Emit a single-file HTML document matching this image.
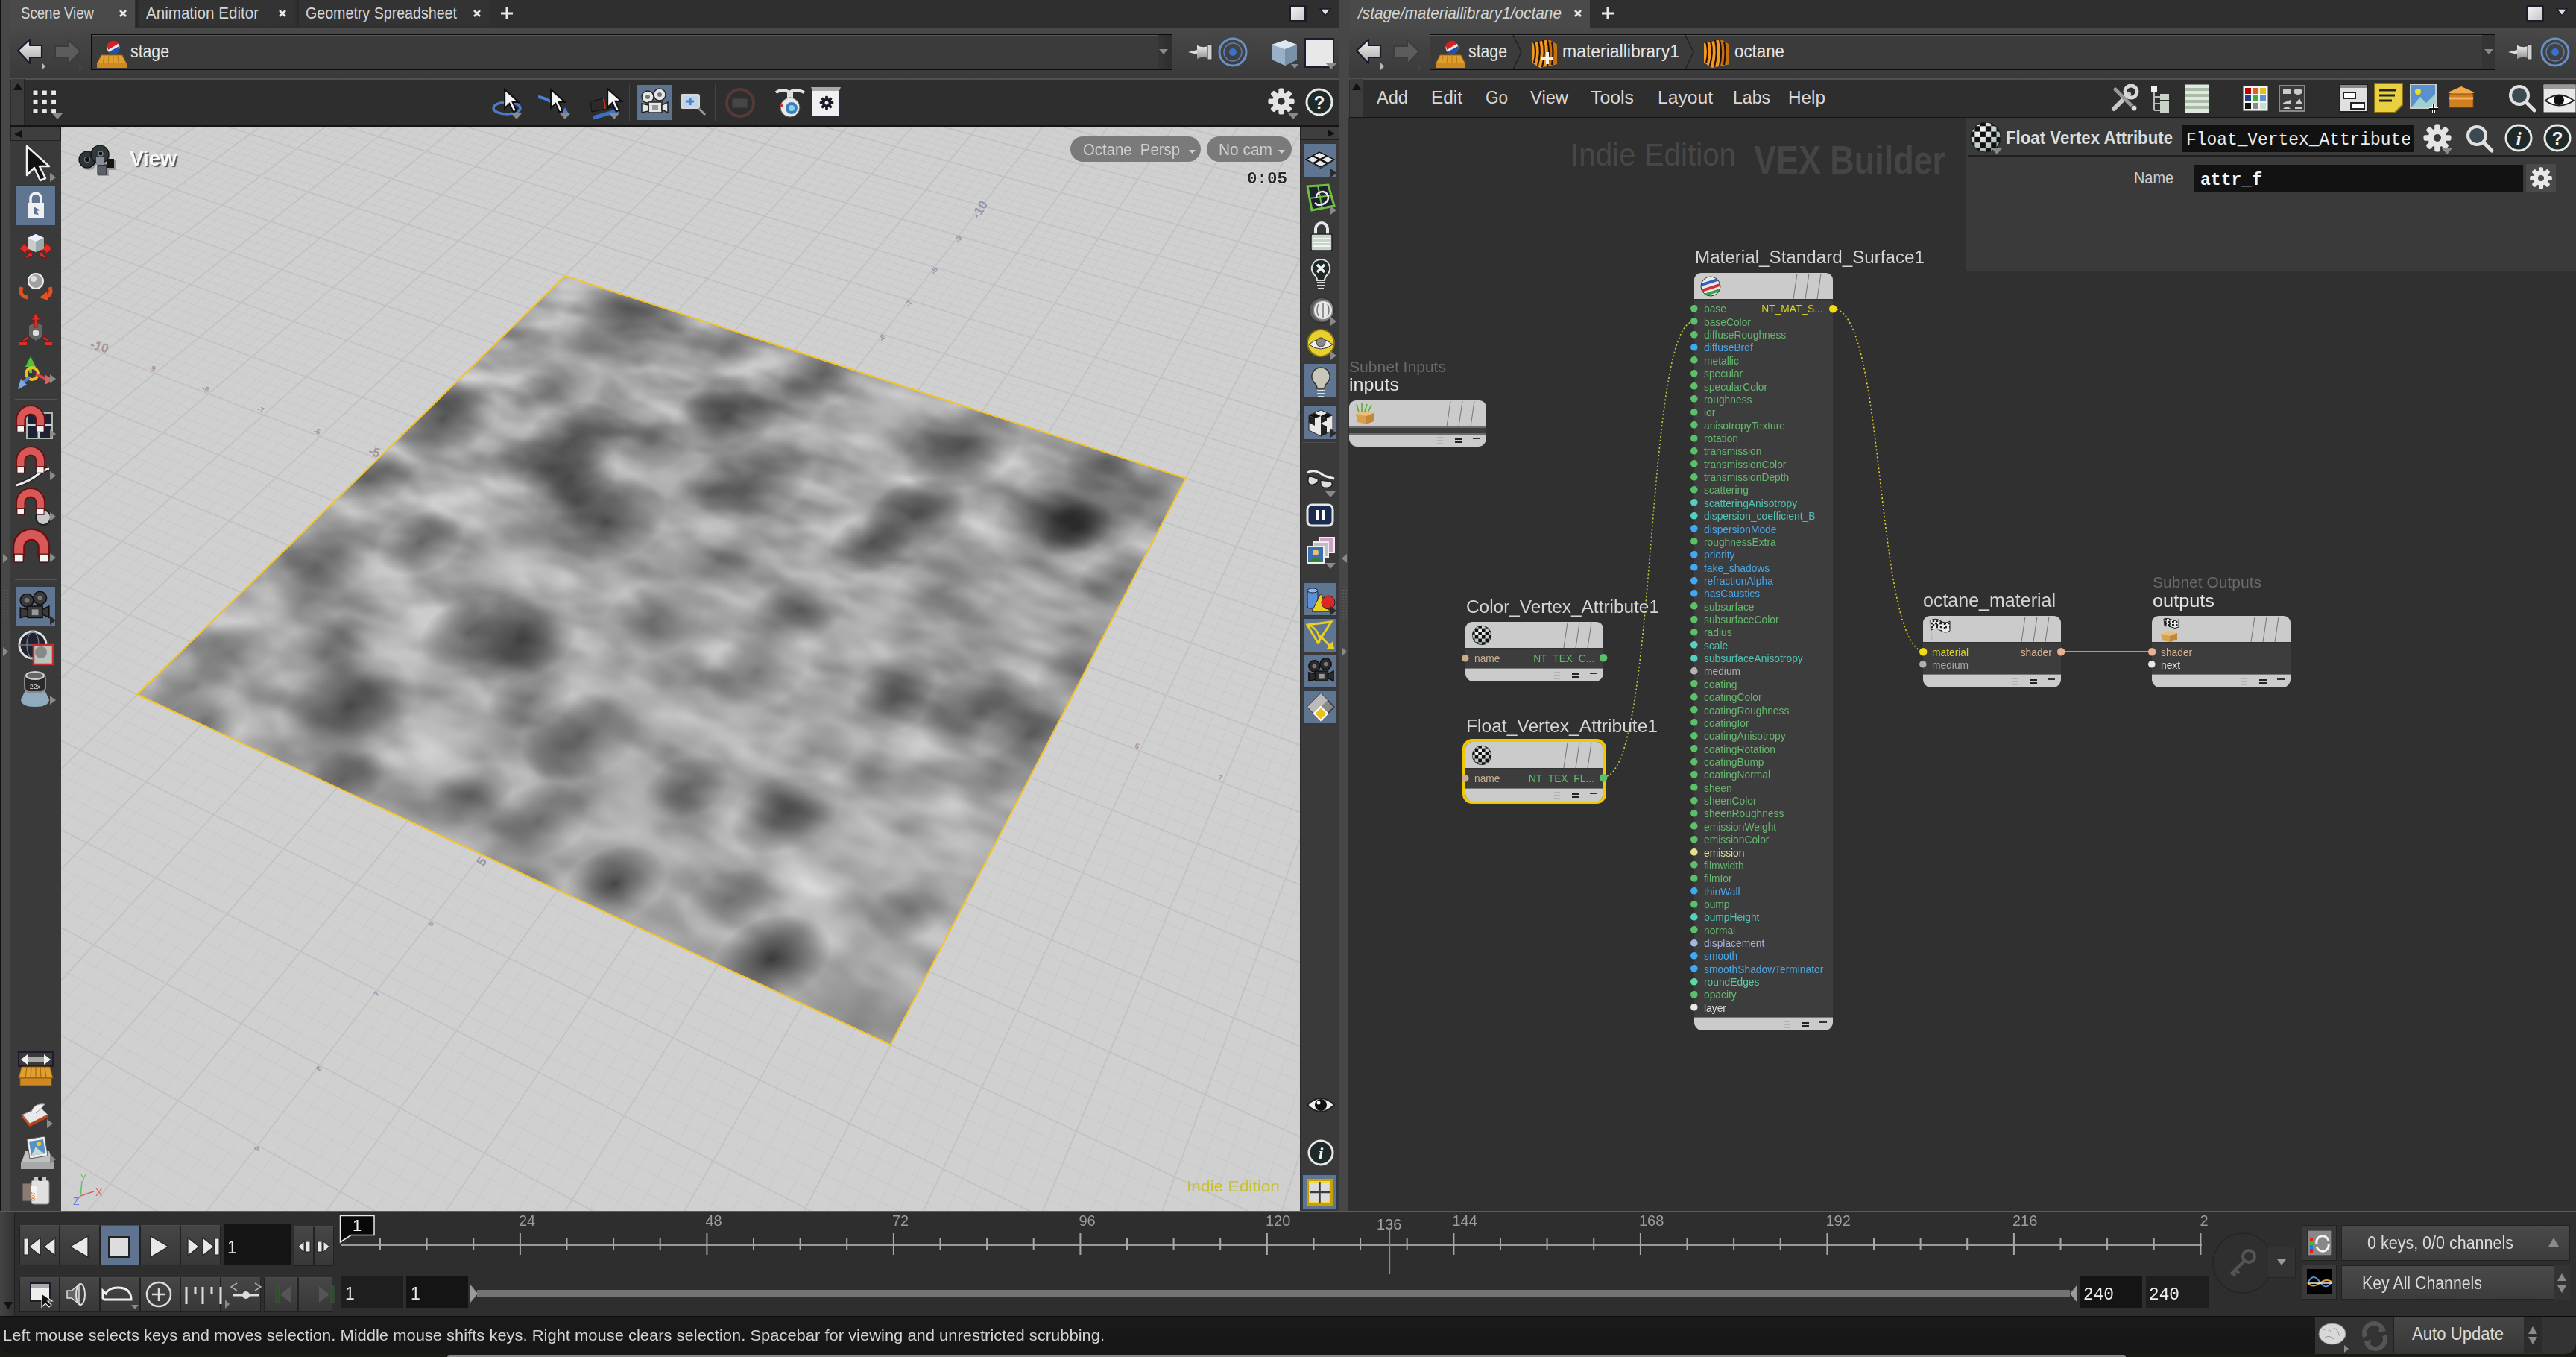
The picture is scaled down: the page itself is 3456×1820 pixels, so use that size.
<!DOCTYPE html>
<html><head><meta charset="utf-8"><style>
html,body{margin:0;padding:0;}
body{width:3456px;height:1820px;overflow:hidden;position:relative;background:#1c1a14;font-family:"Liberation Sans",sans-serif;}
body div{position:absolute;box-sizing:border-box;white-space:nowrap;line-height:1;}
svg{position:absolute;overflow:visible;}
</style></head><body>
<div style="left:0px;top:0px;width:3456px;height:1765px;background:#474747"></div><div style="left:0px;top:0px;width:1px;height:1765px;background:#111"></div><div style="left:13px;top:0px;width:1px;height:1624px;background:#343434"></div><div style="left:14px;top:0px;width:1783px;height:37px;background:#2f2f2f"></div><div style="left:14px;top:0px;width:167px;height:37px;background:#4a4a4a"></div><div style="left:183px;top:0px;width:213px;height:36px;background:#333;box-shadow:inset 3px 0 3px -1px #262626"></div><div style="left:398px;top:0px;width:259px;height:36px;background:#333;box-shadow:inset 3px 0 3px -1px #262626"></div><div style="left:28.0px;top:7.3px;font-size:22px;color:#d4d4d4;font-family:'Liberation Sans',sans-serif;transform:scaleX(0.8464);transform-origin:left;">Scene View</div><div style="left:196.0px;top:7.3px;font-size:22px;color:#d4d4d4;font-family:'Liberation Sans',sans-serif;transform:scaleX(0.9354);transform-origin:left;">Animation Editor</div><div style="left:410.0px;top:7.3px;font-size:22px;color:#d4d4d4;font-family:'Liberation Sans',sans-serif;transform:scaleX(0.8924);transform-origin:left;">Geometry Spreadsheet</div><svg style="left:159px;top:12px" width="12" height="12"><path d="M2 2L10 10M10 2L2 10" stroke="#e8e8e8" stroke-width="2.6"/></svg><svg style="left:373px;top:12px" width="12" height="12"><path d="M2 2L10 10M10 2L2 10" stroke="#e8e8e8" stroke-width="2.6"/></svg><svg style="left:634px;top:12px" width="12" height="12"><path d="M2 2L10 10M10 2L2 10" stroke="#e8e8e8" stroke-width="2.6"/></svg><svg style="left:671px;top:9px" width="18" height="18"><path d="M9 1V17M1 9H17" stroke="#e8e8e8" stroke-width="3"/></svg><div style="left:1729px;top:7px;width:24px;height:22px;background:#1c1c2a;"></div><div style="left:1732px;top:10px;width:18px;height:17px;background:linear-gradient(135deg,#f0f0f0,#c8c8c8)"></div><svg style="left:1769px;top:10px" width="18" height="14"><path d="M2 2H16L9 11Z" fill="#e0e0e0" stroke="#1a1a2a" stroke-width="1.5"/></svg><div style="left:14px;top:37px;width:1783px;height:67px;background:linear-gradient(#4a4a4a,#464646 15%,#3c3c3c 85%,#3a3a3a)"></div><div style="left:1810px;top:37px;width:1646px;height:67px;background:linear-gradient(#4a4a4a,#464646 15%,#3c3c3c 85%,#3a3a3a)"></div><svg style="left:20px;top:50px" width="44" height="44" viewBox="0 0 44 44">
<defs><linearGradient id="gArrow" x1="0" y1="0" x2="0" y2="1"><stop offset="0" stop-color="#f4f4f4"/><stop offset="1" stop-color="#a8a8a8"/></linearGradient></defs>
<path d="M4 18L20 3V11H36V27H20V35Z" fill="url(#gArrow)" stroke="#1a1a2e" stroke-width="2.2" stroke-linejoin="round"/>
<path d="M36 34L41 39L36 44Z" fill="#b8b8b8"/></svg><svg style="left:70px;top:51px" width="44" height="44" viewBox="0 0 44 44">
<path d="M38 18L22 3V11H4V27H22V35Z" fill="#5c5c5c" stroke="#3c3c3c" stroke-width="2"/>
<path d="M36 34L41 39L36 44Z" fill="#444"/></svg><div style="left:122px;top:46px;width:1450px;height:48px;background:#3b3b3b;border:1px solid #0c0c0c;border-right:none;box-shadow:inset 0 1px 0 #5a5a5a"></div><svg style="left:128px;top:52px" width="44.0" height="40.0" viewBox="0 0 44 40">
<path d="M8 22L36 22L42 34L2 34Z" fill="#e0a030" stroke="#a86810" stroke-width="1"/>
<rect x="2" y="33" width="40" height="6" fill="#d08820"/>
<path d="M12 23L10 33M18 23L17 33M24 23L24 33M30 23L31 33" stroke="#b87818" stroke-width="1"/>
<circle cx="24" cy="12" r="8.5" fill="#e8e8e8"/>
<path d="M15.8 9A8.5 8.5 0 0 1 31 6.5L17 15Z" fill="#d82020"/>
<path d="M17.5 18A8.5 8.5 0 0 0 32.3 13L32 10Z" fill="#2050b0"/>
</svg><div style="left:175.0px;top:57.5px;font-size:23px;color:#e6e6e6;font-family:'Liberation Sans',sans-serif;transform:scaleX(0.9242);transform-origin:left;">stage</div><div style="left:1553px;top:47px;width:19px;height:46px;background:linear-gradient(90deg,#363636,#2e2e2e)"></div><svg style="left:1553px;top:64px" width="16" height="12"><path d="M2 2H14L8 9Z" fill="#8a8a8a" stroke="none" stroke-width="1.5"/></svg><svg style="left:1592px;top:53px" width="40" height="34" viewBox="0 0 40 34">
<path d="M2 17L14 14V20Z" fill="#ddd"/><path d="M14 8Q22 12 28 9V25Q22 22 14 26Z" fill="url(#gPin)"/>
<defs><linearGradient id="gPin" x1="0" y1="0" x2="0" y2="1"><stop offset="0" stop-color="#f0f0f0"/><stop offset="1" stop-color="#909090"/></linearGradient></defs>
<rect x="28" y="7" width="6" height="20" fill="#cfcfcf" stroke="#333" stroke-width="1"/></svg><svg style="left:1634px;top:50px" width="40" height="40" viewBox="0 0 40 40">
<circle cx="20" cy="20" r="18" fill="none" stroke="#6a90c8" stroke-width="3"/>
<circle cx="20" cy="20" r="12" fill="none" stroke="#5a80b8" stroke-width="1.5"/>
<circle cx="20" cy="20" r="5" fill="#3a70d0"/></svg><svg style="left:1702px;top:50px" width="44" height="44" viewBox="0 0 44 44">
<path d="M4 10L22 4L38 10L38 30L22 38L4 30Z" fill="#9ab0c8"/>
<path d="M4 10L22 16L38 10L22 4Z" fill="#dce8f0"/><path d="M22 16L38 10V30L22 38Z" fill="#7890a8"/>
<path d="M30 36L40 36L35 42Z" fill="#8a8a8a"/></svg><div style="left:1750px;top:51px;width:40px;height:40px;background:#e8e8e8;border:2px solid #1c1c2e"></div><svg style="left:1778px;top:84px" width="16" height="10"><path d="M0 0H16L8 9Z" fill="#8a8a8a"/></svg><div style="left:14px;top:104px;width:1783px;height:1px;background:#111"></div><div style="left:14px;top:105px;width:1783px;height:2px;background:#505050"></div><div style="left:14px;top:107px;width:1783px;height:61px;background:#2e2e2e"></div><div style="left:14px;top:168px;width:1783px;height:2px;background:#141414"></div><div style="left:15px;top:106px;width:18px;height:62px;background:#3c3c3c;border-right:1px solid #262626"></div><svg style="left:17px;top:110px" width="14" height="12"><path d="M7 1L13 11H1Z" fill="#111"/></svg><svg style="left:43px;top:120px" width="44" height="44" viewBox="-1 -1 44 44"><rect x="0.0" y="0.0" width="7" height="7" fill="#e8e8e8" stroke="#222" stroke-width="1"/><rect x="12.3" y="0.0" width="7" height="7" fill="#e8e8e8" stroke="#222" stroke-width="1"/><rect x="24.6" y="0.0" width="7" height="7" fill="#e8e8e8" stroke="#222" stroke-width="1"/><rect x="0.0" y="12.3" width="7" height="7" fill="#e8e8e8" stroke="#222" stroke-width="1"/><rect x="12.3" y="12.3" width="7" height="7" fill="#e8e8e8" stroke="#222" stroke-width="1"/><rect x="24.6" y="12.3" width="7" height="7" fill="#e8e8e8" stroke="#222" stroke-width="1"/><rect x="0.0" y="24.6" width="7" height="7" fill="#e8e8e8" stroke="#222" stroke-width="1"/><rect x="12.3" y="24.6" width="7" height="7" fill="#e8e8e8" stroke="#222" stroke-width="1"/><rect x="24.6" y="24.6" width="7" height="7" fill="#e8e8e8" stroke="#222" stroke-width="1"/><path d="M26 31H40L33 39Z" fill="#8a8a8a"/></svg><svg style="left:660px;top:132px" width="42" height="24"><ellipse cx="20" cy="13" rx="18" ry="8" fill="none" stroke="#4a7ac8" stroke-width="3.5"/></svg><svg style="left:675px;top:118px" width="27.3" height="35.7" viewBox="0 0 26 34"><path d="M2 2V26L8 20L13 31L17 29L12 18H20Z" fill="#f4f4f4" stroke="#111" stroke-width="2"/></svg><svg style="left:686px;top:152px" width="14" height="9"><path d="M0 0H14L7 8Z" fill="#8a8a8a"/></svg><svg style="left:718px;top:124px" width="50" height="36"><path d="M4 6Q20 8 42 28" fill="none" stroke="#4a80d0" stroke-width="4"/><path d="M36 30L46 30L40 20Z" fill="#4a80d0"/></svg><svg style="left:737px;top:118px" width="27.3" height="35.7" viewBox="0 0 26 34"><path d="M2 2V26L8 20L13 31L17 29L12 18H20Z" fill="#f4f4f4" stroke="#111" stroke-width="2"/></svg><svg style="left:751px;top:152px" width="14" height="9"><path d="M0 0H14L7 8Z" fill="#8a8a8a"/></svg><svg style="left:790px;top:126px" width="52" height="36"><path d="M2 10L30 4L32 18L4 24Z" fill="#2a2a2a" stroke="#111"/><path d="M20 6L22 20" stroke="#c03020" stroke-width="2"/><path d="M6 32L40 22" stroke="#3a70c8" stroke-width="5"/></svg><svg style="left:813px;top:117px" width="27.3" height="35.7" viewBox="0 0 26 34"><path d="M2 2V26L8 20L13 31L17 29L12 18H20Z" fill="#f4f4f4" stroke="#111" stroke-width="2"/></svg><svg style="left:817px;top:152px" width="14" height="9"><path d="M0 0H14L7 8Z" fill="#8a8a8a"/></svg><div style="left:844px;top:113px;width:1px;height:49px;background:#444"></div><div style="left:855px;top:114px;width:46px;height:47px;background:#5e7490"></div><svg style="left:858px;top:117px" width="40.0" height="40.0" viewBox="0 0 40 40">
<circle cx="11" cy="13" r="8" fill="#e6e6e6" stroke="#222" stroke-width="1.5"/><circle cx="11" cy="13" r="3" fill="#777"/>
<circle cx="27" cy="10" r="8" fill="#e6e6e6" stroke="#222" stroke-width="1.5"/><circle cx="27" cy="10" r="3" fill="#777"/>
<rect x="12" y="20" width="18" height="14" fill="#e6e6e6" stroke="#222" stroke-width="1.5"/><rect x="17" y="24" width="8" height="7" fill="#999"/>
<path d="M30 24L38 20V34L30 30Z" fill="#e6e6e6" stroke="#222" stroke-width="1.5"/>
<path d="M12 24L3 22V34L12 32Z" fill="#e6e6e6" stroke="#222" stroke-width="1.5"/></svg><svg style="left:910px;top:122px" width="40" height="36"><rect x="2" y="3" width="28" height="22" rx="4" fill="#d8d8d8" stroke="#333" stroke-width="2"/><rect x="6" y="7" width="20" height="14" fill="#c0d4ea"/><path d="M16 9V19M11 14H21" stroke="#4a80d0" stroke-width="3"/><path d="M28 24L36 32" stroke="#999" stroke-width="3"/></svg><div style="left:959px;top:113px;width:1px;height:49px;background:#444"></div><svg style="left:972px;top:117px" width="42" height="42"><circle cx="21" cy="21" r="18" fill="none" stroke="#553838" stroke-width="4"/><rect x="11" y="15" width="20" height="12" fill="#464646" stroke="#3a3a3a" stroke-width="2"/></svg><div style="left:1026px;top:113px;width:1px;height:49px;background:#444"></div><svg style="left:1039px;top:116px" width="44" height="44"><path d="M2 8Q12 2 20 8Q28 2 40 8" fill="none" stroke="#e0e0e0" stroke-width="4"/><rect x="17" y="8" width="8" height="8" fill="#ddd"/><circle cx="21" cy="28" r="13" fill="#e8e8e8" stroke="#555" stroke-width="1"/><circle cx="23" cy="29" r="8" fill="#3a80b8"/><circle cx="23" cy="29" r="4" fill="#8ad0f0"/><circle cx="10" cy="26" r="2" fill="#e02020"/></svg><div style="left:1088px;top:117px;width:40px;height:40px;background:#f0f0f0;border:2px solid #2a2a3a;border-top:5px solid #aaa"></div><svg style="left:1099px;top:128px" width="20" height="20" viewBox="0 0 40 40"><g stroke="#222" stroke-width="0"><circle cx="20" cy="20" r="12.5" fill="#1a1a2a"/><rect x="16.2" y="1.5" width="7.6" height="12" rx="2.2" fill="#1a1a2a" transform="rotate(0.0 20 20)"/><rect x="16.2" y="1.5" width="7.6" height="12" rx="2.2" fill="#1a1a2a" transform="rotate(45.0 20 20)"/><rect x="16.2" y="1.5" width="7.6" height="12" rx="2.2" fill="#1a1a2a" transform="rotate(90.0 20 20)"/><rect x="16.2" y="1.5" width="7.6" height="12" rx="2.2" fill="#1a1a2a" transform="rotate(135.0 20 20)"/><rect x="16.2" y="1.5" width="7.6" height="12" rx="2.2" fill="#1a1a2a" transform="rotate(180.0 20 20)"/><rect x="16.2" y="1.5" width="7.6" height="12" rx="2.2" fill="#1a1a2a" transform="rotate(225.0 20 20)"/><rect x="16.2" y="1.5" width="7.6" height="12" rx="2.2" fill="#1a1a2a" transform="rotate(270.0 20 20)"/><rect x="16.2" y="1.5" width="7.6" height="12" rx="2.2" fill="#1a1a2a" transform="rotate(315.0 20 20)"/></g><circle cx="20" cy="20" r="5" fill="#f0f0f0"/></svg><svg style="left:1700px;top:117px" width="38" height="38" viewBox="0 0 40 40"><g stroke="#222" stroke-width="0"><circle cx="20" cy="20" r="12.5" fill="#e4e4e4"/><rect x="16.2" y="1.5" width="7.6" height="12" rx="2.2" fill="#e4e4e4" transform="rotate(0.0 20 20)"/><rect x="16.2" y="1.5" width="7.6" height="12" rx="2.2" fill="#e4e4e4" transform="rotate(45.0 20 20)"/><rect x="16.2" y="1.5" width="7.6" height="12" rx="2.2" fill="#e4e4e4" transform="rotate(90.0 20 20)"/><rect x="16.2" y="1.5" width="7.6" height="12" rx="2.2" fill="#e4e4e4" transform="rotate(135.0 20 20)"/><rect x="16.2" y="1.5" width="7.6" height="12" rx="2.2" fill="#e4e4e4" transform="rotate(180.0 20 20)"/><rect x="16.2" y="1.5" width="7.6" height="12" rx="2.2" fill="#e4e4e4" transform="rotate(225.0 20 20)"/><rect x="16.2" y="1.5" width="7.6" height="12" rx="2.2" fill="#e4e4e4" transform="rotate(270.0 20 20)"/><rect x="16.2" y="1.5" width="7.6" height="12" rx="2.2" fill="#e4e4e4" transform="rotate(315.0 20 20)"/></g><circle cx="20" cy="20" r="5" fill="#2e2e2e"/></svg><svg style="left:1728px;top:152px" width="14" height="9"><path d="M0 0H14L7 8Z" fill="#8a8a8a"/></svg><svg style="left:1750px;top:117px" width="40" height="40" viewBox="0 0 40 40"><circle cx="20" cy="20" r="17" fill="#1e2a2a" stroke="#e8e8e8" stroke-width="3"/><text x="20" y="29" text-anchor="middle" font-family="Liberation Sans" font-weight="bold" font-size="24" fill="#f0f0f0">?</text></svg><div style="left:14px;top:170px;width:68px;height:1454px;background:#3a3a3a"></div><div style="left:14px;top:170px;width:68px;height:19px;background:#3e3e3e;border:1px solid #222"></div><svg style="left:18px;top:174px" width="12" height="12"><path d="M1 6L11 1V11Z" fill="#111"/></svg><div style="left:1744px;top:170px;width:53px;height:1454px;background:#3a3a3a;border-left:1px solid #2a2a2a;border-right:1px solid #262626"></div><div style="left:1744px;top:170px;width:53px;height:18px;background:#3e3e3e;border:1px solid #222"></div><svg style="left:1780px;top:173px" width="12" height="12"><path d="M11 6L1 1V11Z" fill="#111"/></svg><div style="left:1797px;top:158px;width:12px;height:1466px;background:#474747"></div><div style="left:1810px;top:0px;width:1646px;height:37px;background:#2f2f2f"></div><div style="left:1810px;top:0px;width:323px;height:37px;background:#4a4a4a"></div><div style="left:1822.0px;top:7.3px;font-size:22px;color:#d4d4d4;font-family:'Liberation Sans',sans-serif;font-style:italic;transform:scaleX(0.9460);transform-origin:left;">/stage/materiallibrary1/octane</div><svg style="left:2111px;top:12px" width="12" height="12"><path d="M2 2L10 10M10 2L2 10" stroke="#e8e8e8" stroke-width="2.6"/></svg><svg style="left:2148px;top:9px" width="18" height="18"><path d="M9 1V17M1 9H17" stroke="#e8e8e8" stroke-width="3"/></svg><div style="left:3389px;top:7px;width:24px;height:22px;background:#1c1c2a;"></div><div style="left:3392px;top:10px;width:18px;height:17px;background:linear-gradient(135deg,#f0f0f0,#c8c8c8)"></div><svg style="left:3428px;top:10px" width="18" height="14"><path d="M2 2H16L9 11Z" fill="#e0e0e0" stroke="#1a1a2a" stroke-width="1.5"/></svg><svg style="left:1816px;top:50px" width="44" height="44" viewBox="0 0 44 44">
<defs><linearGradient id="gArrow" x1="0" y1="0" x2="0" y2="1"><stop offset="0" stop-color="#f4f4f4"/><stop offset="1" stop-color="#a8a8a8"/></linearGradient></defs>
<path d="M4 18L20 3V11H36V27H20V35Z" fill="url(#gArrow)" stroke="#1a1a2e" stroke-width="2.2" stroke-linejoin="round"/>
<path d="M36 34L41 39L36 44Z" fill="#b8b8b8"/></svg><svg style="left:1866px;top:51px" width="44" height="44" viewBox="0 0 44 44">
<path d="M38 18L22 3V11H4V27H22V35Z" fill="#5c5c5c" stroke="#3c3c3c" stroke-width="2"/>
<path d="M36 34L41 39L36 44Z" fill="#444"/></svg><div style="left:1918px;top:46px;width:1430px;height:48px;background:#3b3b3b;border:1px solid #0c0c0c;border-right:none;box-shadow:inset 0 1px 0 #5a5a5a"></div><div style="left:3330px;top:47px;width:18px;height:46px;background:#353535"></div><svg style="left:3331px;top:64px" width="16" height="12"><path d="M2 2H14L8 9Z" fill="#8a8a8a" stroke="none" stroke-width="1.5"/></svg><svg style="left:1924px;top:52px" width="44.0" height="40.0" viewBox="0 0 44 40">
<path d="M8 22L36 22L42 34L2 34Z" fill="#e0a030" stroke="#a86810" stroke-width="1"/>
<rect x="2" y="33" width="40" height="6" fill="#d08820"/>
<path d="M12 23L10 33M18 23L17 33M24 23L24 33M30 23L31 33" stroke="#b87818" stroke-width="1"/>
<circle cx="24" cy="12" r="8.5" fill="#e8e8e8"/>
<path d="M15.8 9A8.5 8.5 0 0 1 31 6.5L17 15Z" fill="#d82020"/>
<path d="M17.5 18A8.5 8.5 0 0 0 32.3 13L32 10Z" fill="#2050b0"/>
</svg><div style="left:1970.0px;top:57.5px;font-size:23px;color:#e6e6e6;font-family:'Liberation Sans',sans-serif;transform:scaleX(0.9242);transform-origin:left;">stage</div><svg style="left:2029px;top:46px" width="14" height="48"><path d="M1 1L12 24L1 47" fill="none" stroke="#222" stroke-width="1.5"/></svg><svg style="left:2052px;top:50px" width="40" height="42" viewBox="0 0 40 42">
<path d="M3 8L26 3L37 10L37 36L14 41L3 34Z" fill="#f09820"/>
<path d="M26 3L37 10L37 36L26 38Z" fill="#c87010"/>
<path d="M6 6Q10 20 6 34M12 5Q16 20 11 38M18 4Q22 20 17 40M24 3Q28 20 24 39M30 6Q33 20 30 37" stroke="#201008" stroke-width="2.2" fill="none"/>
<path d='M24 20V36M16 28H32' stroke='#f4f4f4' stroke-width='4'/>
</svg><div style="left:2096.0px;top:57.5px;font-size:23px;color:#e6e6e6;font-family:'Liberation Sans',sans-serif;transform:scaleX(0.9986);transform-origin:left;">materiallibrary1</div><svg style="left:2260px;top:46px" width="14" height="48"><path d="M1 1L12 24L1 47" fill="none" stroke="#222" stroke-width="1.5"/></svg><svg style="left:2283px;top:50px" width="40" height="42" viewBox="0 0 40 42">
<path d="M3 8L26 3L37 10L37 36L14 41L3 34Z" fill="#f09820"/>
<path d="M26 3L37 10L37 36L26 38Z" fill="#c87010"/>
<path d="M6 6Q10 20 6 34M12 5Q16 20 11 38M18 4Q22 20 17 40M24 3Q28 20 24 39M30 6Q33 20 30 37" stroke="#201008" stroke-width="2.2" fill="none"/>

</svg><div style="left:2327.0px;top:57.5px;font-size:23px;color:#e6e6e6;font-family:'Liberation Sans',sans-serif;transform:scaleX(0.9701);transform-origin:left;">octane</div><svg style="left:3363px;top:53px" width="40" height="34" viewBox="0 0 40 34">
<path d="M2 17L14 14V20Z" fill="#ddd"/><path d="M14 8Q22 12 28 9V25Q22 22 14 26Z" fill="url(#gPin)"/>
<defs><linearGradient id="gPin" x1="0" y1="0" x2="0" y2="1"><stop offset="0" stop-color="#f0f0f0"/><stop offset="1" stop-color="#909090"/></linearGradient></defs>
<rect x="28" y="7" width="6" height="20" fill="#cfcfcf" stroke="#333" stroke-width="1"/></svg><svg style="left:3408px;top:50px" width="40" height="40" viewBox="0 0 40 40">
<circle cx="20" cy="20" r="18" fill="none" stroke="#6a90c8" stroke-width="3"/>
<circle cx="20" cy="20" r="12" fill="none" stroke="#5a80b8" stroke-width="1.5"/>
<circle cx="20" cy="20" r="5" fill="#3a70d0"/></svg><div style="left:1810px;top:104px;width:1646px;height:1px;background:#111"></div><div style="left:1810px;top:105px;width:1646px;height:2px;background:#505050"></div><div style="left:1810px;top:107px;width:1646px;height:50px;background:#2e2e2e"></div><div style="left:1810px;top:157px;width:1646px;height:1px;background:#141414"></div><div style="left:1811px;top:106px;width:18px;height:51px;background:#3c3c3c;border-right:1px solid #262626"></div><svg style="left:1813px;top:110px" width="14" height="12"><path d="M7 1L13 11H1Z" fill="#111"/></svg><div style="left:1847.0px;top:119.5px;font-size:23px;color:#d8d8d8;font-family:'Liberation Sans',sans-serif;transform:scaleX(1.0260);transform-origin:left;">Add</div><div style="left:1920.0px;top:119.5px;font-size:23px;color:#d8d8d8;font-family:'Liberation Sans',sans-serif;transform:scaleX(1.0595);transform-origin:left;">Edit</div><div style="left:1993.0px;top:119.5px;font-size:23px;color:#d8d8d8;font-family:'Liberation Sans',sans-serif;transform:scaleX(0.9776);transform-origin:left;">Go</div><div style="left:2053.0px;top:119.5px;font-size:23px;color:#d8d8d8;font-family:'Liberation Sans',sans-serif;transform:scaleX(1.0316);transform-origin:left;">View</div><div style="left:2134.0px;top:119.5px;font-size:23px;color:#d8d8d8;font-family:'Liberation Sans',sans-serif;transform:scaleX(1.0800);transform-origin:left;">Tools</div><div style="left:2224.0px;top:119.5px;font-size:23px;color:#d8d8d8;font-family:'Liberation Sans',sans-serif;transform:scaleX(1.0715);transform-origin:left;">Layout</div><div style="left:2325.0px;top:119.5px;font-size:23px;color:#d8d8d8;font-family:'Liberation Sans',sans-serif;transform:scaleX(1.0025);transform-origin:left;">Labs</div><div style="left:2399.0px;top:119.5px;font-size:23px;color:#d8d8d8;font-family:'Liberation Sans',sans-serif;transform:scaleX(1.0568);transform-origin:left;">Help</div><div style="left:82px;top:170px;width:1662px;height:1454px;background:#d0d0d0;overflow:hidden"></div><svg style="left:82px;top:170px;overflow:hidden" width="1662" height="1454">
<path d="M378.5 -520.4L-3365.8 1491.0M363.2 -518.8L3278.9 115.2M387.2 -518.5L-3357.9 1504.2M356.7 -515.3L3281.5 123.3M396.0 -516.6L-3349.9 1517.6M350.1 -511.8L3284.2 131.3M404.9 -514.7L-3341.9 1531.0M343.5 -508.3L3286.9 139.5M422.6 -510.8L-3325.6 1558.3M330.2 -501.2L3292.3 156.0M431.5 -508.9L-3317.4 1572.1M323.5 -497.6L3295.1 164.4M440.5 -507.0L-3309.1 1586.0M316.8 -494.0L3297.8 172.8M449.4 -505.0L-3300.7 1600.0M310.0 -490.4L3300.6 181.3M467.5 -501.1L-3283.7 1628.4M296.3 -483.1L3306.3 198.6M476.5 -499.2L-3275.1 1642.8M289.4 -479.4L3309.2 207.3M485.6 -497.2L-3266.4 1657.3M282.4 -475.6L3312.1 216.2M494.7 -495.2L-3257.7 1672.0M275.4 -471.9L3315.0 225.1M513.0 -491.2L-3240.0 1701.6M261.3 -464.4L3320.9 243.1M522.2 -489.3L-3231.0 1716.6M254.2 -460.6L3324.0 252.3M531.4 -487.3L-3221.9 1731.8M247.0 -456.7L3327.0 261.5M540.7 -485.3L-3212.8 1747.1M239.8 -452.9L3330.1 270.8M559.3 -481.2L-3194.3 1778.0M225.3 -445.1L3336.3 289.7M568.6 -479.2L-3184.9 1793.7M218.0 -441.2L3339.4 299.3M578.0 -477.2L-3175.4 1809.5M210.6 -437.3L3342.6 309.0M587.4 -475.1L-3165.9 1825.5M203.2 -433.3L3345.8 318.8M606.3 -471.0L-3146.5 1857.9M188.2 -425.3L3352.3 338.6M615.8 -469.0L-3136.7 1874.3M180.7 -421.3L3355.6 348.6M625.3 -466.9L-3126.8 1890.9M173.1 -417.2L3359.0 358.8M634.9 -464.8L-3116.9 1907.6M165.4 -413.1L3362.3 369.0M654.1 -460.7L-3096.6 1941.5M150.0 -404.9L3369.2 389.8M663.8 -458.6L-3086.3 1958.7M142.2 -400.7L3372.6 400.4M673.4 -456.5L-3076.0 1976.0M134.3 -396.5L3376.1 411.0M683.1 -454.4L-3065.5 1993.5M126.5 -392.3L3379.7 421.8M702.7 -450.2L-3044.3 2029.0M110.5 -383.8L3386.9 443.7M712.5 -448.0L-3033.5 2047.0M102.5 -379.5L3390.5 454.7M722.3 -445.9L-3022.7 2065.2M94.4 -375.2L3394.2 465.9M732.2 -443.8L-3011.7 2083.6M86.3 -370.8L3397.9 477.3M752.0 -439.5L-2989.4 2120.8M69.8 -362.1L3405.5 500.3M762.0 -437.3L-2978.1 2139.7M61.5 -357.6L3409.3 511.9M772.0 -435.2L-2966.7 2158.8M53.2 -353.2L3413.2 523.7M782.0 -433.0L-2955.2 2178.1M44.8 -348.7L3417.1 535.6M802.2 -428.6L-2931.8 2217.2M27.8 -339.6L3425.1 559.9M812.3 -426.4L-2920.0 2237.0M19.2 -335.0L3429.1 572.2M822.5 -424.2L-2908.0 2257.1M10.6 -330.4L3433.2 584.6M832.7 -422.0L-2895.9 2277.3M1.9 -325.8L3437.3 597.2M853.2 -417.6L-2871.3 2318.5M-15.6 -316.4L3445.7 622.7M863.5 -415.3L-2858.8 2339.3M-24.4 -311.7L3450.0 635.7M873.9 -413.1L-2846.2 2360.4M-33.3 -306.9L3454.3 648.8M884.2 -410.8L-2833.5 2381.7M-42.3 -302.1L3458.7 662.1M905.1 -406.3L-2807.6 2425.0M-60.4 -292.5L3467.5 689.1M915.6 -404.1L-2794.5 2447.0M-69.6 -287.6L3472.0 702.8M926.1 -401.8L-2781.2 2469.3M-78.8 -282.6L3476.6 716.7M936.6 -399.5L-2767.8 2491.7M-88.1 -277.7L3481.2 730.7M957.9 -394.9L-2740.5 2537.4M-106.8 -267.7L3490.6 759.3M968.5 -392.6L-2726.6 2560.6M-116.3 -262.6L3495.4 773.8M979.2 -390.3L-2712.6 2584.0M-125.8 -257.5L3500.2 788.5M989.9 -387.9L-2698.4 2607.7M-135.4 -252.4L3505.1 803.3M1011.5 -383.3L-2669.6 2655.9M-154.8 -242.0L3515.0 833.6M1022.4 -380.9L-2655.0 2680.4M-164.6 -236.8L3520.1 849.0M1033.2 -378.6L-2640.2 2705.2M-174.4 -231.5L3525.2 864.6M1044.2 -376.2L-2625.2 2730.2M-184.4 -226.2L3530.4 880.4M1066.1 -371.4L-2594.8 2781.2M-204.5 -215.5L3541.0 912.5M1077.1 -369.1L-2579.3 2807.1M-214.6 -210.1L3546.3 928.8M1088.2 -366.7L-2563.6 2833.3M-224.8 -204.6L3551.8 945.4M1099.3 -364.3L-2547.8 2859.8M-235.1 -199.1L3557.3 962.2M1121.6 -359.4L-2515.5 2913.8M-255.9 -188.0L3568.5 996.3M1132.9 -357.0L-2499.1 2941.2M-266.4 -182.4L3574.3 1013.8M1144.1 -354.5L-2482.5 2969.0M-277.0 -176.7L3580.1 1031.4M1155.4 -352.1L-2465.7 2997.1M-287.7 -171.0L3585.9 1049.2M1178.2 -347.2L-2431.5 3054.3M-309.2 -159.5L3597.9 1085.7M1189.6 -344.7L-2414.1 3083.5M-320.1 -153.7L3604.0 1104.2M1201.1 -342.2L-2396.5 3113.0M-331.1 -147.8L3610.2 1123.0M1212.6 -339.7L-2378.6 3142.8M-342.2 -141.9L3616.4 1142.1M1235.7 -334.7L-2342.3 3203.7M-364.6 -130.0L3629.2 1181.0M1247.3 -332.2L-2323.7 3234.7M-375.9 -123.9L3635.7 1200.8M1259.0 -329.7L-2305.0 3266.0M-387.3 -117.8L3642.4 1220.9M1270.7 -327.1L-2286.0 3297.8M-398.7 -111.7L3649.1 1241.3M1294.2 -322.0L-2247.3 3362.6M-422.0 -99.3L3662.7 1282.9M1306.1 -319.5L-2227.6 3395.6M-433.7 -93.0L3669.7 1304.2M1318.0 -316.9L-2207.6 3429.0M-445.5 -86.7L3676.8 1325.7M1329.9 -314.3L-2187.3 3462.9M-457.5 -80.3L3684.0 1347.6M1353.8 -309.1L-2146.0 3532.0M-481.6 -67.4L3698.7 1392.2M1365.9 -306.5L-2125.0 3567.3M-493.8 -60.9L3706.2 1415.0M1378.0 -303.9L-2103.6 3603.0M-506.1 -54.3L3713.8 1438.2M1390.1 -301.3L-2082.0 3639.2M-518.5 -47.7L3721.5 1461.7M1414.5 -296.0L-2037.8 3713.1M-543.6 -34.3L3737.3 1509.7M1426.8 -293.3L-2015.3 3750.8M-556.2 -27.5L3745.4 1534.3M1439.1 -290.6L-1992.5 3789.0M-569.0 -20.7L3753.5 1559.2M1451.5 -288.0L-1969.3 3827.8M-581.9 -13.8L3761.9 1584.5M1476.4 -282.6L-1922.0 3906.9M-608.0 0.1L3778.9 1636.3M1488.9 -279.9L-1897.8 3947.4M-621.2 7.2L3787.6 1662.8M1501.4 -277.2L-1873.3 3988.4M-634.5 14.3L3796.5 1689.8M1514.0 -274.4L-1848.4 4030.0M-647.9 21.5L3805.5 1717.1M1539.3 -268.9L-1797.6 4115.1M-675.1 36.0L3823.9 1773.2M1552.1 -266.2L-1771.6 4158.6M-688.9 43.3L3833.3 1801.9M1564.8 -263.4L-1745.2 4202.7M-702.7 50.7L3842.9 1831.0M1577.7 -260.6L-1718.4 4247.5M-716.7 58.2L3852.6 1860.7M1603.5 -255.1L-1663.6 4339.2M-745.0 73.3L3872.6 1921.5M1616.4 -252.2L-1635.6 4386.1M-759.4 81.0L3882.9 1952.7M1629.5 -249.4L-1607.2 4433.7M-773.8 88.7L3893.3 1984.4M1642.5 -246.6L-1578.3 4482.0M-788.4 96.5L3903.9 2016.7M1668.8 -240.9L-1519.1 4581.0M-817.9 112.3L3925.7 2082.9M1682.0 -238.0L-1488.8 4631.7M-832.9 120.3L3936.9 2116.9M1695.3 -235.2L-1458.0 4683.2M-848.0 128.3L3948.3 2151.5M1708.6 -232.3L-1426.7 4735.6M-863.2 136.5L3959.8 2186.8M1735.4 -226.5L-1362.6 4842.9M-894.0 152.9L3983.6 2259.2M1748.9 -223.5L-1329.7 4897.9M-909.6 161.3L3995.9 2296.4M1762.4 -220.6L-1296.3 4953.8M-925.4 169.7L4008.3 2334.3M1776.0 -217.7L-1262.3 5010.7M-941.3 178.2L4021.0 2373.0M1803.3 -211.8L-1192.6 5127.4M-973.5 195.4L4047.2 2452.5M1817.1 -208.8L-1156.8 5187.2M-989.8 204.1L4060.6 2493.4M1830.8 -205.8L-1120.4 5248.1M-1006.3 212.9L4074.3 2535.1M1844.7 -202.8L-1083.4 5310.1M-1022.9 221.8L4088.3 2577.6M1872.5 -196.8L-1007.3 5437.5M-1056.6 239.8L4117.1 2665.3M1886.5 -193.7L-968.2 5502.9M-1073.7 248.9L4132.0 2710.5M1900.6 -190.7L-928.4 5569.5M-1090.9 258.1L4147.1 2756.6M1914.7 -187.6L-887.8 5637.3M-1108.3 267.4L4162.6 2803.7M1943.1 -181.5L-804.4 5776.8M-1143.6 286.3L4194.5 2900.9M1957.4 -178.4L-761.6 5848.6M-1161.5 295.9L4211.0 2951.0M1971.7 -175.3L-717.8 5921.7M-1179.5 305.5L4227.9 3002.3M1986.1 -172.2L-673.3 5996.3M-1197.8 315.2L4245.1 3054.6M2015.1 -165.9L-581.5 6149.9M-1234.8 335.0L4280.7 3163.0M2029.6 -162.7L-534.3 6229.0M-1253.5 345.0L4299.1 3219.0M2044.3 -159.6L-486.0 6309.6M-1272.5 355.1L4317.9 3276.3M2059.0 -156.4L-436.8 6392.0M-1291.6 365.4L4337.2 3334.9M2088.5 -150.0L-335.3 6561.8M-1330.4 386.1L4377.2 3456.4M2103.4 -146.8L-283.0 6649.4M-1350.1 396.6L4397.8 3519.3M2118.3 -143.5L-229.5 6738.8M-1370.0 407.2L4419.0 3583.8M2133.3 -140.3L-174.9 6830.2M-1390.1 418.0L4440.8 3649.9M2163.4 -133.8L-62.1 7019.0M-1430.8 439.8L4485.9 3787.1M2178.6 -130.5L-3.8 7116.6M-1451.5 450.8L4509.3 3858.3M2193.8 -127.2L55.8 7216.3M-1472.4 462.0L4533.3 3931.4M2209.1 -123.9L116.8 7318.3M-1493.5 473.3L4558.0 4006.5M2239.8 -117.2L243.0 7529.5M-1536.4 496.2L4609.3 4162.6M2255.3 -113.9L308.3 7638.8M-1558.2 507.8L4636.0 4244.0M2270.9 -110.5L375.2 7750.7M-1580.2 519.6L4663.5 4327.5M2286.5 -107.1L443.7 7865.3M-1602.5 531.5L4691.8 4413.5M2317.9 -100.3L585.7 8103.0M-1647.6 555.6L4750.7 4592.9M2333.7 -96.9L659.4 8226.3M-1670.6 567.9L4781.5 4686.5M2349.5 -93.4L735.0 8352.8M-1693.8 580.3L4813.2 4783.0M2365.5 -90.0L812.5 8482.5M-1717.2 592.8L4845.9 4882.4M2397.5 -83.1L973.7 8752.1M-1764.9 618.3L4914.3 5090.6M2413.7 -79.6L1057.5 8892.3M-1789.1 631.2L4950.2 5199.7M2429.9 -76.0L1143.5 9036.3M-1813.6 644.3L4987.2 5312.3M2446.1 -72.5L1232.0 9184.3M-1838.3 657.5L5025.4 5428.6M2478.9 -65.4L1416.3 9492.8M-1888.7 684.4L5105.8 5673.2M2495.3 -61.9L1512.4 9653.6M-1914.3 698.1L5148.1 5801.8M2511.9 -58.3L1611.4 9819.1M-1940.2 711.9L5191.9 5935.0M2528.5 -54.7L1713.2 9989.5M-1966.3 725.9L5237.2 6072.9M2561.9 -47.4L1926.1 10345.8M-2019.6 754.4L5333.0 6364.2M2578.8 -43.8L2037.5 10532.2M-2046.7 768.8L5383.6 6518.1M2595.7 -40.1L2152.4 10724.4M-2074.1 783.5L5436.1 6678.0M2612.6 -36.5L2270.9 10922.7M-2101.8 798.3L5490.7 6844.2M2646.8 -29.1L2519.6 11338.9M-2158.3 828.4L5606.7 7197.1M2664.0 -25.3L2650.2 11557.4M-2187.0 843.8L5668.4 7384.6M2681.3 -21.6L2785.2 11783.3M-2216.1 859.3L5732.7 7580.2M2698.6 -17.8L2924.9 12017.0M-2245.5 875.0L5799.8 7784.3M2733.5 -10.3L3219.3 12509.6M-2305.4 907.1L5943.2 8220.6M2751.1 -6.5L3374.5 12769.3M-2335.9 923.4L6019.9 8454.0M2768.7 -2.6L3535.5 13038.7M-2366.8 939.9L6100.3 8698.7M2786.5 1.2L3702.6 13318.2M-2398.1 956.6L6184.7 8955.3M2822.1 8.9L4056.4 13910.3M-2461.8 990.6L6366.5 9508.4M2840.1 12.8L4243.9 14224.1M-2494.2 1008.0L6464.6 9807.0M2858.1 16.7L4439.2 14550.8M-2527.1 1025.5L6568.1 10121.8M2876.3 20.6L4642.5 14891.1M-2560.4 1043.3L6677.4 10454.3M2912.8 28.6L5075.8 15616.1M-2628.3 1079.6L6915.4 11178.4M2931.1 32.5L5307.0 16002.9M-2662.9 1098.1L7045.3 11573.7M2949.6 36.5L5548.6 16407.2M-2698.0 1116.8L7183.4 11993.9M2968.1 40.5L5801.6 16830.4M-2733.5 1135.8L7330.6 12441.4M3005.4 48.6L6344.5 17738.9M-2806.0 1174.5L7655.5 13430.1M3024.2 52.7L6636.4 18227.4M-2843.0 1194.3L7835.6 13978.0M3043.1 56.8L6943.3 18740.9M-2880.5 1214.3L8029.2 14566.9M3062.0 60.9L7266.4 19281.5M-2918.5 1234.6L8237.8 15201.6M3100.2 69.1L7966.5 20453.0M-2996.1 1276.1L8707.9 16631.6M3119.4 73.3L8346.7 21089.1M-3035.7 1297.3L8974.0 17441.1M3138.7 77.5L8749.3 21762.8M-3075.9 1318.7L9264.6 18325.2M3158.1 81.7L9176.4 22477.3M-3116.6 1340.5L9583.3 19294.7M3197.1 90.1L10113.4 24045.2M-3199.8 1385.0L10322.8 21544.6M3216.8 94.4L10628.9 24907.8M-3242.3 1407.7L10755.2 22860.2M3236.5 98.7L11180.1 25830.1M-3285.5 1430.7L11239.4 24333.2M3256.4 103.0L11770.8 26818.5M-3329.3 1454.1L11785.3 25993.9" stroke="#c6c8c9" stroke-width="1" fill="none"/>
<path d="M369.7 -522.3L-3373.7 1477.9M369.7 -522.3L3276.3 107.3M413.7 -512.8L-3333.8 1544.6M336.9 -504.8L3289.6 147.7M458.4 -503.1L-3292.2 1614.2M303.1 -486.7L3303.5 189.9M503.9 -493.2L-3248.9 1686.7M268.4 -468.2L3318.0 234.1M550.0 -483.2L-3203.6 1762.5M232.6 -449.0L3333.1 280.2M596.9 -473.1L-3156.3 1841.6M195.7 -429.3L3349.1 328.6M644.5 -462.8L-3106.8 1924.5M157.7 -409.0L3365.7 379.4M692.9 -452.3L-3054.9 2011.2M118.5 -388.1L3383.3 432.7M742.1 -441.6L-3000.6 2102.1M78.1 -366.5L3401.7 488.7M792.1 -430.8L-2943.6 2197.5M36.3 -344.2L3421.1 547.7M842.9 -419.8L-2883.7 2297.8M-6.8 -321.1L3441.5 609.9M894.6 -408.6L-2820.6 2403.3M-51.3 -297.3L3463.1 675.5M947.2 -397.2L-2754.2 2514.4M-97.4 -272.7L3485.9 744.9M1000.7 -385.6L-2684.1 2631.7M-145.1 -247.2L3510.0 818.4M1055.1 -373.8L-2610.1 2755.5M-194.4 -220.9L3535.7 896.3M1110.5 -361.8L-2531.7 2886.6M-245.5 -193.6L3562.9 979.2M1166.8 -349.6L-2448.7 3025.6M-298.4 -165.3L3591.9 1067.3M1224.1 -337.2L-2360.6 3173.1M-353.3 -136.0L3622.8 1161.4M1282.4 -324.6L-2266.8 3330.0M-410.3 -105.5L3655.8 1262.0M1341.8 -311.7L-2166.8 3497.2M-469.5 -73.9L3691.3 1369.7M1402.3 -298.6L-2060.1 3675.9M-531.0 -41.0L3729.3 1485.5M1463.9 -285.3L-1945.8 3867.1M-594.9 -6.9L3770.3 1610.2M1526.6 -271.7L-1823.2 4072.3M-661.5 28.7L3814.6 1744.9M1590.5 -257.8L-1691.2 4293.0M-730.8 65.7L3862.6 1890.9M1655.7 -243.7L-1548.9 4531.1M-803.1 104.4L3914.7 2049.5M1722.0 -229.4L-1394.9 4788.8M-878.5 144.7L3971.6 2222.7M1789.6 -214.7L-1227.8 5068.5M-957.3 186.8L4034.0 2412.3M1858.6 -199.8L-1045.7 5373.2M-1039.7 230.8L4102.6 2621.0M1928.9 -184.6L-846.5 5706.4M-1125.9 276.8L4178.4 2851.8M2000.6 -169.0L-627.9 6072.3M-1216.2 325.1L4262.7 3108.2M2073.7 -153.2L-386.6 6476.0M-1310.9 375.7L4357.0 3394.9M2148.3 -137.0L-119.1 6923.6M-1410.3 428.8L4463.0 3717.6M2224.4 -120.5L179.2 7422.7M-1514.9 484.7L4583.3 4083.5M2302.1 -103.7L513.8 7982.7M-1624.9 543.5L4720.8 4501.9M2381.5 -86.5L892.1 8615.5M-1740.9 605.5L4879.6 4984.9M2462.5 -69.0L1322.9 9336.4M-1863.4 670.9L5065.0 5548.9M2545.2 -51.1L1818.1 10165.0M-1992.8 740.0L5284.2 6215.9M2629.7 -32.8L2393.2 11127.4M-2129.9 813.3L5547.6 7017.1M2716.0 -14.1L3069.5 12259.0M-2275.3 891.0L5869.8 7997.6M2804.3 5.1L3876.1 13608.6M-2429.7 973.5L6273.3 9224.9M2894.5 24.6L4854.6 15245.9M-2594.1 1061.3L6793.0 10805.9M2986.7 44.6L6066.6 17273.9M-2769.5 1155.1L7487.6 12919.1M3081.0 65.0L7607.0 19851.4M-2957.0 1255.2L8463.3 15887.7M3177.5 85.9L9630.2 23236.7M-3157.9 1362.6L9934.3 20362.6M3276.3 107.3L12405.4 27880.3M-3373.7 1477.9L12405.4 27880.3" stroke="#c0c2c3" stroke-width="1.8" fill="none"/><text x="51.1" y="295.8" font-family="Liberation Sans" font-weight="bold" font-size="17" fill="#a89494" text-anchor="middle" dominant-baseline="middle" transform="rotate(17 51.1 295.8)">-10</text><text x="420.0" y="437.3" font-family="Liberation Sans" font-weight="bold" font-size="17" fill="#a89494" text-anchor="middle" dominant-baseline="middle" transform="rotate(17 420.0 437.3)">-5</text><text x="122.0" y="324.6" font-family="Liberation Sans" font-weight="bold" font-size="10" fill="#a89494" text-anchor="middle" dominant-baseline="middle" transform="rotate(17 122.0 324.6)">-9</text><text x="193.8" y="352.2" font-family="Liberation Sans" font-weight="bold" font-size="10" fill="#a89494" text-anchor="middle" dominant-baseline="middle" transform="rotate(17 193.8 352.2)">-8</text><text x="267.5" y="380.4" font-family="Liberation Sans" font-weight="bold" font-size="10" fill="#a89494" text-anchor="middle" dominant-baseline="middle" transform="rotate(17 267.5 380.4)">-7</text><text x="343.2" y="409.4" font-family="Liberation Sans" font-weight="bold" font-size="10" fill="#a89494" text-anchor="middle" dominant-baseline="middle" transform="rotate(17 343.2 409.4)">-6</text><text x="1443.5" y="831.3" font-family="Liberation Sans" font-weight="bold" font-size="10" fill="#a89494" text-anchor="middle" dominant-baseline="middle" transform="rotate(17 1443.5 831.3)">6</text><text x="1554.8" y="874.0" font-family="Liberation Sans" font-weight="bold" font-size="10" fill="#a89494" text-anchor="middle" dominant-baseline="middle" transform="rotate(17 1554.8 874.0)">7</text><text x="1233.5" y="111.8" font-family="Liberation Sans" font-weight="bold" font-size="17" fill="#9494ac" text-anchor="middle" dominant-baseline="middle" transform="rotate(-58 1233.5 111.8)">-10</text><text x="565.2" y="986.3" font-family="Liberation Sans" font-weight="bold" font-size="17" fill="#9494ac" text-anchor="middle" dominant-baseline="middle" transform="rotate(-58 565.2 986.3)">5</text><text x="1204.4" y="151.2" font-family="Liberation Sans" font-weight="bold" font-size="10" fill="#9494ac" text-anchor="middle" dominant-baseline="middle" transform="rotate(-58 1204.4 151.2)">-9</text><text x="1171.9" y="193.3" font-family="Liberation Sans" font-weight="bold" font-size="10" fill="#9494ac" text-anchor="middle" dominant-baseline="middle" transform="rotate(-58 1171.9 193.3)">-8</text><text x="1137.9" y="237.4" font-family="Liberation Sans" font-weight="bold" font-size="10" fill="#9494ac" text-anchor="middle" dominant-baseline="middle" transform="rotate(-58 1137.9 237.4)">-7</text><text x="1102.3" y="283.5" font-family="Liberation Sans" font-weight="bold" font-size="10" fill="#9494ac" text-anchor="middle" dominant-baseline="middle" transform="rotate(-58 1102.3 283.5)">-6</text><text x="496.4" y="1069.3" font-family="Liberation Sans" font-weight="bold" font-size="10" fill="#9494ac" text-anchor="middle" dominant-baseline="middle" transform="rotate(-58 496.4 1069.3)">6</text><text x="424.0" y="1163.2" font-family="Liberation Sans" font-weight="bold" font-size="10" fill="#9494ac" text-anchor="middle" dominant-baseline="middle" transform="rotate(-58 424.0 1163.2)">7</text><text x="346.6" y="1263.6" font-family="Liberation Sans" font-weight="bold" font-size="10" fill="#9494ac" text-anchor="middle" dominant-baseline="middle" transform="rotate(-58 346.6 1263.6)">8</text><text x="263.6" y="1371.2" font-family="Liberation Sans" font-weight="bold" font-size="10" fill="#9494ac" text-anchor="middle" dominant-baseline="middle" transform="rotate(-58 263.6 1371.2)">9</text></svg><div style="left:0;top:0;width:1000px;height:1000px;transform-origin:0 0;transform:matrix3d(0.772051,0.233790,0,-0.00014786,-0.743393,0.427215,0,-0.00027052,0,0,1,0,916.2028,447.1582,0,1.209189)"><svg width="1000" height="1000" style="left:0;top:0">
<defs><filter id="noise" x="0" y="0" width="100%" height="100%" color-interpolation-filters="sRGB">
<feTurbulence type="fractalNoise" baseFrequency="0.01 0.016" numOctaves="3" seed="11"/>
<feGaussianBlur stdDeviation="4"/>
<feColorMatrix type="matrix" values="0.55 0 0 0 0.38  0.55 0 0 0 0.38  0.55 0 0 0 0.38  0 0 0 0 1"/>
</filter></defs>
<rect width="1000" height="1000" filter="url(#noise)"/></svg></div><svg style="left:0;top:0" width="1800" height="1624"><defs><clipPath id="pclip"><polygon points="184.1,931.5 757.7,369.8 1590.7,641.6 1194.8,1401.3"/></clipPath>
<radialGradient id="rgd"><stop offset="0" stop-color="#141414" stop-opacity="1"/><stop offset="0.45" stop-color="#141414" stop-opacity="0.6"/><stop offset="1" stop-color="#141414" stop-opacity="0"/></radialGradient>
<radialGradient id="rgl"><stop offset="0" stop-color="#c4c4c4" stop-opacity="1"/><stop offset="1" stop-color="#c4c4c4" stop-opacity="0"/></radialGradient></defs>
<g clip-path="url(#pclip)"><ellipse cx="768" cy="484" rx="96" ry="64" transform="rotate(-22 768 484)" fill="url(#rgl)" fill-opacity="0.5"/><ellipse cx="806" cy="628" rx="72" ry="48" transform="rotate(-22 806 628)" fill="url(#rgl)" fill-opacity="0.5"/><ellipse cx="901" cy="636" rx="72" ry="48" transform="rotate(-22 901 636)" fill="url(#rgl)" fill-opacity="0.5"/><ellipse cx="1033" cy="590" rx="72" ry="48" transform="rotate(-22 1033 590)" fill="url(#rgl)" fill-opacity="0.5"/><ellipse cx="920" cy="826" rx="84" ry="56" transform="rotate(-22 920 826)" fill="url(#rgl)" fill-opacity="0.5"/><ellipse cx="692" cy="750" rx="72" ry="48" transform="rotate(-22 692 750)" fill="url(#rgl)" fill-opacity="0.5"/><ellipse cx="526" cy="766" rx="72" ry="48" transform="rotate(-22 526 766)" fill="url(#rgl)" fill-opacity="0.5"/><ellipse cx="381" cy="857" rx="72" ry="48" transform="rotate(-22 381 857)" fill="url(#rgl)" fill-opacity="0.5"/><ellipse cx="640" cy="766" rx="72" ry="48" transform="rotate(-22 640 766)" fill="url(#rgl)" fill-opacity="0.5"/><ellipse cx="1333" cy="728" rx="84" ry="56" transform="rotate(-22 1333 728)" fill="url(#rgl)" fill-opacity="0.5"/><ellipse cx="1181" cy="823" rx="72" ry="48" transform="rotate(-22 1181 823)" fill="url(#rgl)" fill-opacity="0.5"/><ellipse cx="1352" cy="830" rx="72" ry="48" transform="rotate(-22 1352 830)" fill="url(#rgl)" fill-opacity="0.5"/><ellipse cx="1466" cy="747" rx="60" ry="40" transform="rotate(-22 1466 747)" fill="url(#rgl)" fill-opacity="0.5"/><ellipse cx="768" cy="908" rx="72" ry="48" transform="rotate(-22 768 908)" fill="url(#rgl)" fill-opacity="0.5"/><ellipse cx="844" cy="1075" rx="84" ry="56" transform="rotate(-22 844 1075)" fill="url(#rgl)" fill-opacity="0.5"/><ellipse cx="882" cy="1162" rx="72" ry="48" transform="rotate(-22 882 1162)" fill="url(#rgl)" fill-opacity="0.5"/><ellipse cx="984" cy="961" rx="72" ry="48" transform="rotate(-22 984 961)" fill="url(#rgl)" fill-opacity="0.5"/><ellipse cx="1110" cy="961" rx="72" ry="48" transform="rotate(-22 1110 961)" fill="url(#rgl)" fill-opacity="0.5"/><ellipse cx="1190" cy="559" rx="84" ry="56" transform="rotate(-22 1190 559)" fill="url(#rgl)" fill-opacity="0.5"/><ellipse cx="598" cy="991" rx="72" ry="48" transform="rotate(-22 598 991)" fill="url(#rgl)" fill-opacity="0.5"/><ellipse cx="594" cy="562" rx="77" ry="51" transform="rotate(-22 594 562)" fill="url(#rgd)" fill-opacity="0.63"/><ellipse cx="769" cy="590" rx="72" ry="48" transform="rotate(-22 769 590)" fill="url(#rgd)" fill-opacity="0.63"/><ellipse cx="836" cy="438" rx="96" ry="64" transform="rotate(-22 836 438)" fill="url(#rgd)" fill-opacity="0.52"/><ellipse cx="813" cy="700" rx="84" ry="56" transform="rotate(-22 813 700)" fill="url(#rgd)" fill-opacity="0.69"/><ellipse cx="765" cy="640" rx="67" ry="45" transform="rotate(-22 765 640)" fill="url(#rgd)" fill-opacity="0.57"/><ellipse cx="775" cy="674" rx="60" ry="40" transform="rotate(-22 775 674)" fill="url(#rgd)" fill-opacity="0.46"/><ellipse cx="697" cy="857" rx="84" ry="56" transform="rotate(-22 697 857)" fill="url(#rgd)" fill-opacity="0.57"/><ellipse cx="564" cy="728" rx="60" ry="40" transform="rotate(-22 564 728)" fill="url(#rgd)" fill-opacity="0.57"/><ellipse cx="425" cy="760" rx="72" ry="48" transform="rotate(-22 425 760)" fill="url(#rgd)" fill-opacity="0.34"/><ellipse cx="628" cy="849" rx="67" ry="45" transform="rotate(-22 628 849)" fill="url(#rgd)" fill-opacity="0.57"/><ellipse cx="495" cy="644" rx="60" ry="40" transform="rotate(-22 495 644)" fill="url(#rgd)" fill-opacity="0.40"/><ellipse cx="439" cy="877" rx="72" ry="48" transform="rotate(-22 439 877)" fill="url(#rgd)" fill-opacity="0.25"/><ellipse cx="877" cy="830" rx="72" ry="48" transform="rotate(-22 877 830)" fill="url(#rgd)" fill-opacity="0.40"/><ellipse cx="745" cy="519" rx="60" ry="40" transform="rotate(-22 745 519)" fill="url(#rgd)" fill-opacity="0.34"/><ellipse cx="309" cy="876" rx="60" ry="40" transform="rotate(-22 309 876)" fill="url(#rgd)" fill-opacity="0.29"/><ellipse cx="412" cy="804" rx="60" ry="40" transform="rotate(-22 412 804)" fill="url(#rgd)" fill-opacity="0.25"/><ellipse cx="275" cy="967" rx="60" ry="40" transform="rotate(-22 275 967)" fill="url(#rgd)" fill-opacity="0.40"/><ellipse cx="703" cy="860" rx="72" ry="48" transform="rotate(-22 703 860)" fill="url(#rgd)" fill-opacity="0.29"/><ellipse cx="711" cy="617" rx="60" ry="40" transform="rotate(-22 711 617)" fill="url(#rgd)" fill-opacity="0.34"/><ellipse cx="874" cy="594" rx="60" ry="40" transform="rotate(-22 874 594)" fill="url(#rgd)" fill-opacity="0.34"/><ellipse cx="1436" cy="692" rx="108" ry="72" transform="rotate(-22 1436 692)" fill="url(#rgd)" fill-opacity="0.69"/><ellipse cx="1443" cy="709" rx="53" ry="35" transform="rotate(-22 1443 709)" fill="url(#rgd)" fill-opacity="0.63"/><ellipse cx="1226" cy="694" rx="72" ry="48" transform="rotate(-22 1226 694)" fill="url(#rgd)" fill-opacity="0.63"/><ellipse cx="1170" cy="728" rx="60" ry="40" transform="rotate(-22 1170 728)" fill="url(#rgd)" fill-opacity="0.57"/><ellipse cx="1291" cy="599" rx="84" ry="56" transform="rotate(-22 1291 599)" fill="url(#rgd)" fill-opacity="0.57"/><ellipse cx="977" cy="556" rx="77" ry="51" transform="rotate(-22 977 556)" fill="url(#rgd)" fill-opacity="0.63"/><ellipse cx="1011" cy="640" rx="84" ry="56" transform="rotate(-22 1011 640)" fill="url(#rgd)" fill-opacity="0.57"/><ellipse cx="1102" cy="503" rx="60" ry="40" transform="rotate(-22 1102 503)" fill="url(#rgd)" fill-opacity="0.52"/><ellipse cx="1053" cy="541" rx="60" ry="40" transform="rotate(-22 1053 541)" fill="url(#rgd)" fill-opacity="0.34"/><ellipse cx="1485" cy="618" rx="60" ry="40" transform="rotate(-22 1485 618)" fill="url(#rgd)" fill-opacity="0.40"/><ellipse cx="1268" cy="789" rx="72" ry="48" transform="rotate(-22 1268 789)" fill="url(#rgd)" fill-opacity="0.40"/><ellipse cx="952" cy="662" rx="60" ry="40" transform="rotate(-22 952 662)" fill="url(#rgd)" fill-opacity="0.34"/><ellipse cx="1549" cy="655" rx="60" ry="40" transform="rotate(-22 1549 655)" fill="url(#rgd)" fill-opacity="0.34"/><ellipse cx="979" cy="460" rx="60" ry="40" transform="rotate(-22 979 460)" fill="url(#rgd)" fill-opacity="0.34"/><ellipse cx="1504" cy="773" rx="60" ry="40" transform="rotate(-22 1504 773)" fill="url(#rgd)" fill-opacity="0.34"/><ellipse cx="1447" cy="899" rx="60" ry="40" transform="rotate(-22 1447 899)" fill="url(#rgd)" fill-opacity="0.34"/><ellipse cx="1200" cy="918" rx="60" ry="40" transform="rotate(-22 1200 918)" fill="url(#rgd)" fill-opacity="0.34"/><ellipse cx="965" cy="750" rx="60" ry="40" transform="rotate(-22 965 750)" fill="url(#rgd)" fill-opacity="0.34"/><ellipse cx="1072" cy="818" rx="67" ry="45" transform="rotate(-22 1072 818)" fill="url(#rgd)" fill-opacity="0.40"/><ellipse cx="467" cy="948" rx="96" ry="64" transform="rotate(-22 467 948)" fill="url(#rgd)" fill-opacity="0.63"/><ellipse cx="779" cy="988" rx="84" ry="56" transform="rotate(-22 779 988)" fill="url(#rgd)" fill-opacity="0.57"/><ellipse cx="722" cy="1101" rx="72" ry="48" transform="rotate(-22 722 1101)" fill="url(#rgd)" fill-opacity="0.52"/><ellipse cx="825" cy="1185" rx="72" ry="48" transform="rotate(-22 825 1185)" fill="url(#rgd)" fill-opacity="0.69"/><ellipse cx="630" cy="1067" rx="60" ry="40" transform="rotate(-22 630 1067)" fill="url(#rgd)" fill-opacity="0.40"/><ellipse cx="459" cy="1047" rx="60" ry="40" transform="rotate(-22 459 1047)" fill="url(#rgd)" fill-opacity="0.46"/><ellipse cx="711" cy="938" rx="60" ry="40" transform="rotate(-22 711 938)" fill="url(#rgd)" fill-opacity="0.40"/><ellipse cx="260" cy="920" rx="60" ry="40" transform="rotate(-22 260 920)" fill="url(#rgd)" fill-opacity="0.40"/><ellipse cx="1034" cy="1287" rx="84" ry="56" transform="rotate(-22 1034 1287)" fill="url(#rgd)" fill-opacity="0.75"/><ellipse cx="1382" cy="986" rx="72" ry="48" transform="rotate(-22 1382 986)" fill="url(#rgd)" fill-opacity="0.57"/><ellipse cx="1314" cy="955" rx="84" ry="56" transform="rotate(-22 1314 955)" fill="url(#rgd)" fill-opacity="0.57"/><ellipse cx="1015" cy="900" rx="72" ry="48" transform="rotate(-22 1015 900)" fill="url(#rgd)" fill-opacity="0.46"/><ellipse cx="1053" cy="1090" rx="77" ry="51" transform="rotate(-22 1053 1090)" fill="url(#rgd)" fill-opacity="0.46"/><ellipse cx="977" cy="1208" rx="60" ry="40" transform="rotate(-22 977 1208)" fill="url(#rgd)" fill-opacity="0.40"/><ellipse cx="1198" cy="940" rx="60" ry="40" transform="rotate(-22 1198 940)" fill="url(#rgd)" fill-opacity="0.40"/><ellipse cx="1218" cy="1222" rx="60" ry="40" transform="rotate(-22 1218 1222)" fill="url(#rgd)" fill-opacity="0.34"/><ellipse cx="1039" cy="1103" rx="60" ry="40" transform="rotate(-22 1039 1103)" fill="url(#rgd)" fill-opacity="0.29"/><ellipse cx="920" cy="1056" rx="60" ry="40" transform="rotate(-22 920 1056)" fill="url(#rgd)" fill-opacity="0.34"/><ellipse cx="1090" cy="1010" rx="60" ry="40" transform="rotate(-22 1090 1010)" fill="url(#rgd)" fill-opacity="0.34"/></g></svg><svg style="left:0;top:0" width="1800" height="1624"><polygon points="184.1,931.5 757.7,369.8 1590.7,641.6 1194.8,1401.3" fill="none" stroke="#f6c524" stroke-width="2" stroke-linejoin="round"/></svg><svg style="left:104px;top:194px" width="52" height="46"><g transform="translate(2,2)" opacity="0.25"><circle cx="13" cy="21" r="11" fill="#000"/><circle cx="30" cy="14" r="12" fill="#000"/><rect x="26" y="26" width="14" height="14" fill="#000"/><rect x="39" y="19" width="11" height="13" fill="#000"/></g><circle cx="13" cy="20" r="11" fill="#2e3436" stroke="#111" stroke-width="1.2"/><circle cx="13" cy="20" r="3.5" fill="#0c0c0c" stroke="#778" stroke-width="1.2"/><circle cx="30" cy="13" r="12" fill="#30383a" stroke="#111" stroke-width="1.2"/><circle cx="31" cy="12" r="3" fill="#0c0c0c" stroke="#889" stroke-width="1.2"/><rect x="39" y="19" width="10" height="12" fill="#151515"/><rect x="27" y="27" width="12" height="13" fill="#5a6068" stroke="#111"/><rect x="25" y="17" width="10" height="10" fill="#8a909a"/></svg><div style="left:174.0px;top:199.2px;font-size:28px;color:#f8f8f8;font-family:'Liberation Sans',sans-serif;font-weight:bold;text-shadow:2px 2px 1px #555;transform:scaleX(0.9951);transform-origin:left;">View</div><div style="left:1436px;top:183px;width:175px;height:34px;background:#7a7a7a;border-radius:17px"></div><div style="left:1453.0px;top:190.3px;font-size:22px;color:#d0d0d0;font-family:'Liberation Sans',sans-serif;transform:scaleX(0.9243);transform-origin:left;">Octane&nbsp; Persp</div><svg style="left:1595px;top:201px" width="10" height="6"><path d="M0 0H9L4.5 5Z" fill="#d0d0d0"/></svg><div style="left:1619px;top:183px;width:114px;height:34px;background:#7a7a7a;border-radius:17px"></div><div style="left:1635.0px;top:190.3px;font-size:22px;color:#d0d0d0;font-family:'Liberation Sans',sans-serif;transform:scaleX(0.9499);transform-origin:left;">No cam</div><svg style="left:1715px;top:201px" width="10" height="6"><path d="M0 0H9L4.5 5Z" fill="#d0d0d0"/></svg><div style="left:1673.0px;top:230.3px;font-size:22px;color:#262626;font-family:'Liberation Mono',monospace;font-weight:bold;text-shadow:0 0 2px #fff,0 0 1px #fff;transform:scaleX(1.0225);transform-origin:left;">0:05</div><div style="left:1592.0px;top:1580.2px;font-size:21px;color:#c8c030;font-family:'Liberation Sans',sans-serif;transform:scaleX(1.0814);transform-origin:left;">Indie Edition</div><svg style="left:98px;top:1572px" width="44" height="44"><path d="M10 32L28 26" stroke="#e06060" stroke-width="1.5"/><path d="M10 32L12 12" stroke="#60c060" stroke-width="1.5"/><path d="M10 32L4 38" stroke="#6080e0" stroke-width="1.5"/><text x="30" y="32" font-size="14" fill="#e06060" font-family="Liberation Sans">X</text><text x="10" y="12" font-size="12" fill="#60c060" font-family="Liberation Sans">Y</text><text x="0" y="44" font-size="14" fill="#6a80e0" font-family="Liberation Sans">Z</text></svg><svg style="left:33px;top:193px" width="34" height="52"><path d="M3 3V42L13 32L21 49L28 46L20 30H33Z" fill="#111" stroke="#f0f0f0" stroke-width="2.5" stroke-linejoin="round"/></svg><svg style="left:66px;top:231px" width="10" height="14"><path d="M1 1L9 7L1 13Z" fill="#8a8a8a"/></svg><div style="left:20px;top:248px;width:55px;height:55px;background:#5f7592;border:1px solid #2a3a4a"></div><svg style="left:33px;top:256px" width="30" height="40"><path d="M8 16V10A7 7 0 0 1 22 10V16" fill="none" stroke="#f0f0f0" stroke-width="3.5"/><rect x="4" y="16" width="22" height="20" fill="#f0f0f0"/><path d="M12 21L21 26L16 27L19 32L12 31Z" fill="#5f7592"/></svg><svg style="left:23px;top:311px" width="50" height="40"><path d="M3 22L12 14V19H20V25H12V30Z M47 22L38 14V19H30V25H38V30Z" fill="#d83028" stroke="#801010" stroke-width="1"/>
<path d="M10 36L18 26L21 32Z M40 36L32 26L29 32Z" fill="#d83028" stroke="#801010"/><path d="M14 8L25 3L36 8V22L25 27L14 22Z" fill="#c8cccc"/><path d="M14 8L25 13L36 8L25 3Z" fill="#eef"/><path d="M25 13V27L36 22V8Z" fill="#9aa"/></svg><svg style="left:23px;top:365px" width="50" height="42"><circle cx="25" cy="12" r="10" fill="#a0a0a0" stroke="#eee" stroke-width="2"/><circle cx="22" cy="9" r="4" fill="#ddd"/>
<path d="M6 20Q2 32 14 34" fill="none" stroke="#e05020" stroke-width="5"/><path d="M44 20Q48 32 36 34" fill="none" stroke="#e05020" stroke-width="5"/><path d="M30 34L40 26L42 38Z" fill="#e85020"/></svg><svg style="left:23px;top:417px" width="50" height="50"><path d="M16 20L25 14L34 20V34L25 40L16 34Z" fill="#707070" opacity="0.8"/><path d="M21 27L25 25L29 27V32L25 34L21 32Z" fill="#ddd"/>
<path d="M25 3L19 12H23V22H27V12H31Z" fill="#d83028" stroke="#801010"/><path d="M4 42L14 34L16 38Z M46 42L36 34L34 38Z" fill="#d83028" stroke="#801010"/><path d="M3 44H13M37 44H47" stroke="#d83028" stroke-width="4"/></svg><svg style="left:22px;top:474px" width="52" height="50"><path d="M19 4L12 18H26Z" fill="#50c040"/><path d="M19 18V26" stroke="#50c040" stroke-width="4"/><circle cx="21" cy="27" r="8" fill="none" stroke="#e8c020" stroke-width="4"/>
<path d="M26 28L44 36" stroke="#e04040" stroke-width="4"/><path d="M38 28L50 36L38 42Z" fill="#e06060"/><path d="M17 32L8 40" stroke="#5080d0" stroke-width="4"/><path d="M2 48L6 34L14 42Z" fill="#80a8e0"/></svg><svg style="left:66px;top:501px" width="10" height="14"><path d="M1 1L9 7L1 13Z" fill="#8a8a8a"/></svg><div style="left:20px;top:535px;width:56px;height:1px;background:#555"></div><svg style="left:34px;top:552px" width="38" height="38"><rect x="2" y="2" width="34" height="34" fill="#1e2038" stroke="#aabbaa" stroke-width="2"/><path d="M18 2V36M2 18H36" stroke="#c8d8c8" stroke-width="3"/></svg><svg style="left:22px;top:546px" width="38" height="38" viewBox="0 0 40 40"><path d="M6 30V18A14 14 0 0 1 34 18V30" fill="none" stroke="#6a1010" stroke-width="14"/>
<path d="M6 30V18A14 14 0 0 1 34 18V30" fill="none" stroke="#d85858" stroke-width="10"/><rect x="1" y="26" width="10" height="9" fill="#f4f4f4" stroke="#4a0808"/><rect x="29" y="26" width="10" height="9" fill="#f4f4f4" stroke="#4a0808"/></svg><svg style="left:66px;top:575px" width="10" height="14"><path d="M1 1L9 7L1 13Z" fill="#8a8a8a"/></svg><svg style="left:20px;top:625px" width="48" height="30"><path d="M2 26Q20 20 30 12T46 4" fill="none" stroke="#222" stroke-width="6"/><path d="M2 26Q20 20 30 12T46 4" fill="none" stroke="#eee" stroke-width="3"/></svg><svg style="left:22px;top:601px" width="38" height="38" viewBox="0 0 40 40"><path d="M6 30V18A14 14 0 0 1 34 18V30" fill="none" stroke="#6a1010" stroke-width="14"/>
<path d="M6 30V18A14 14 0 0 1 34 18V30" fill="none" stroke="#d85858" stroke-width="10"/><rect x="1" y="26" width="10" height="9" fill="#f4f4f4" stroke="#4a0808"/><rect x="29" y="26" width="10" height="9" fill="#f4f4f4" stroke="#4a0808"/></svg><svg style="left:66px;top:631px" width="10" height="14"><path d="M1 1L9 7L1 13Z" fill="#8a8a8a"/></svg><svg style="left:46px;top:682px" width="26" height="26"><circle cx="12" cy="12" r="10" fill="#c8c8c8" stroke="#222" stroke-width="2"/></svg><svg style="left:22px;top:657px" width="38" height="38" viewBox="0 0 40 40"><path d="M6 30V18A14 14 0 0 1 34 18V30" fill="none" stroke="#6a1010" stroke-width="14"/>
<path d="M6 30V18A14 14 0 0 1 34 18V30" fill="none" stroke="#d85858" stroke-width="10"/><rect x="1" y="26" width="10" height="9" fill="#f4f4f4" stroke="#4a0808"/><rect x="29" y="26" width="10" height="9" fill="#f4f4f4" stroke="#4a0808"/></svg><svg style="left:66px;top:686px" width="10" height="14"><path d="M1 1L9 7L1 13Z" fill="#8a8a8a"/></svg><svg style="left:18px;top:712px" width="48" height="48" viewBox="0 0 40 40"><path d="M6 30V18A14 14 0 0 1 34 18V30" fill="none" stroke="#6a1010" stroke-width="14"/>
<path d="M6 30V18A14 14 0 0 1 34 18V30" fill="none" stroke="#d85858" stroke-width="10"/><rect x="1" y="26" width="10" height="9" fill="#f4f4f4" stroke="#4a0808"/><rect x="29" y="26" width="10" height="9" fill="#f4f4f4" stroke="#4a0808"/></svg><svg style="left:66px;top:741px" width="10" height="14"><path d="M1 1L9 7L1 13Z" fill="#8a8a8a"/></svg><div style="left:20px;top:777px;width:56px;height:1px;background:#555"></div><div style="left:20px;top:786px;width:55px;height:54px;background:#5f7592;border:1px solid #2a3a4a"></div><svg style="left:24px;top:791px" width="44.0" height="44.0" viewBox="0 0 40 40">
<circle cx="11" cy="13" r="8" fill="#3a3a3a" stroke="#111" stroke-width="1.5"/><circle cx="11" cy="13" r="3" fill="#777"/>
<circle cx="27" cy="10" r="8" fill="#3a3a3a" stroke="#111" stroke-width="1.5"/><circle cx="27" cy="10" r="3" fill="#777"/>
<rect x="12" y="20" width="18" height="14" fill="#3a3a3a" stroke="#111" stroke-width="1.5"/><rect x="17" y="24" width="8" height="7" fill="#999"/>
<path d="M30 24L38 20V34L30 30Z" fill="#3a3a3a" stroke="#111" stroke-width="1.5"/>
<path d="M12 24L3 22V34L12 32Z" fill="#3a3a3a" stroke="#111" stroke-width="1.5"/></svg><svg style="left:66px;top:825px" width="10" height="14"><path d="M1 1L9 7L1 13Z" fill="#2a2a2a"/></svg><svg style="left:23px;top:845px" width="50" height="50"><circle cx="21" cy="20" r="18" fill="#1e2234" stroke="#e0e0e0" stroke-width="3"/><ellipse cx="21" cy="20" rx="8" ry="18" fill="none" stroke="#777" stroke-width="1.5"/><path d="M3 20H39" stroke="#777" stroke-width="1.5"/><rect x="22" y="20" width="26" height="26" fill="#b8c4bc" stroke="#d02828" stroke-width="2.5"/><circle cx="32" cy="30" r="8" fill="#888"/></svg><svg style="left:24px;top:898px" width="46" height="52"><path d="M4 40Q4 50 23 50Q42 50 42 40L36 28H10Z" fill="#a8c8e0" opacity="0.8"/><rect x="9" y="6" width="28" height="24" rx="6" fill="#2a2a2a" stroke="#888" stroke-width="2"/><ellipse cx="23" cy="8" rx="12" ry="5" fill="#666" stroke="#ccc" stroke-width="2"/><text x="23" y="26" text-anchor="middle" font-size="9" fill="#ddd" font-family="Liberation Sans">22x</text></svg><svg style="left:66px;top:932px" width="10" height="14"><path d="M1 1L9 7L1 13Z" fill="#8a8a8a"/></svg><svg style="left:24px;top:1410px" width="48" height="48"><rect x="1" y="1" width="46" height="19" fill="#3a3a3a" stroke="#1c1c2e" stroke-width="2"/><path d="M4 11L13 4V18Z M44 11L35 4V18Z" fill="#f0f0f0"/><rect x="13" y="8" width="22" height="6" fill="#a8aca0"/><path d="M5 21H43L47 36H1Z" fill="#e0a030" stroke="#8a5810"/><path d="M12 21L10 36M18 21L17 36M24 21V36M30 21L31 36M36 21L38 36" stroke="#a86810" stroke-width="1.2"/><rect x="3" y="36" width="42" height="10" fill="#d08820" stroke="#8a5810"/></svg><svg style="left:28px;top:1477px" width="40" height="36"><path d="M2 18L26 8L36 18L12 30Z" fill="#e8e8e8" stroke="#888"/><path d="M2 18L12 30V34L2 22Z" fill="#d05020"/><path d="M12 30L36 18V22L12 34Z" fill="#c04010"/><path d="M14 14Q18 2 32 4Q28 10 20 16" fill="#f0f0f0" stroke="#999"/></svg><svg style="left:62px;top:1500px" width="10" height="14"><path d="M1 1L9 7L1 13Z" fill="#8a8a8a"/></svg><svg style="left:26px;top:1522px" width="48" height="48"><path d="M8 22L40 22L46 40H2Z" fill="#c0c0c0"/><rect x="2" y="36" width="44" height="10" fill="#a8a8a8"/><path d="M10 6L34 2L38 28L14 32Z" fill="#f0f0f0" stroke="#555"/><path d="M13 9L32 6L35 25L16 28Z" fill="#5a90c8"/><circle cx="26" cy="12" r="3" fill="#e8d020"/><path d="M16 28L22 16L28 22L35 25Z" fill="#c8d8d0"/></svg><svg style="left:66px;top:1548px" width="10" height="14"><path d="M1 1L9 7L1 13Z" fill="#8a8a8a"/></svg><svg style="left:28px;top:1577px" width="42" height="42"><rect x="2" y="10" width="18" height="24" fill="#8a7a70" stroke="#444"/><rect x="14" y="6" width="24" height="32" rx="3" fill="#e0e0e0" stroke="#888"/><rect x="18" y="1" width="16" height="6" fill="#c8c8c8"/><circle cx="26" cy="4" r="3" fill="#222"/><rect x="14" y="14" width="8" height="16" fill="#f4f4f4"/><text x="18" y="26" font-size="7" fill="#e07020" font-family="Liberation Sans" transform="rotate(90 18 22)">200</text></svg><div style="left:1748px;top:192px;width:45px;height:46px;background:#5f7592;border:1px solid #2a3a4a"></div><svg style="left:1750px;top:198px" width="42" height="34"><path d="M2 16L20 6L40 16L22 26Z" fill="#e8e8e8" stroke="#111" stroke-width="1.5"/><path d="M11 11L31 21M30 11L12 21" stroke="#111" stroke-width="2.5"/><path d="M6 18L22 28L38 18" fill="none" stroke="#333" stroke-width="1"/></svg><svg style="left:1784px;top:225px" width="10" height="14"><path d="M1 1L9 7L1 13Z" fill="#2a2a2a"/></svg><svg style="left:1752px;top:246px" width="40" height="40"><path d="M2 4L30 2L38 30L8 36Z" fill="#1e2230" stroke="#70c040" stroke-width="3"/><path d="M16 3L22 34M5 20L34 16" stroke="#70c040" stroke-width="2"/><path d="M14 20A8 8 0 1 1 26 26Q18 32 12 26" fill="none" stroke="#eee" stroke-width="2.5"/></svg><svg style="left:1784px;top:275px" width="10" height="14"><path d="M1 1L9 7L1 13Z" fill="#8a8a8a"/></svg><svg style="left:1756px;top:296px" width="34" height="42"><path d="M9 18V11A8 8 0 0 1 25 11V18" fill="none" stroke="#e8e8e8" stroke-width="4"/><rect x="3" y="18" width="28" height="22" rx="2" fill="#c8d4c8" stroke="#222" stroke-width="1.5"/><path d="M5 24H29M5 29H29M5 34H29" stroke="#f4f4f4" stroke-width="2"/></svg><svg style="left:1757px;top:346px" width="30" height="44"><path d="M15 2A12 12 0 0 1 24 22Q20 26 20 30H10Q10 26 6 22A12 12 0 0 1 15 2Z" fill="#1e2a2a" stroke="#ddd" stroke-width="2"/><path d="M10 9L20 19M20 9L10 19" stroke="#f0f0f0" stroke-width="3.5"/><path d="M10 33H20M10 37H20M11 41H19" stroke="#ddd" stroke-width="2"/></svg><svg style="left:1753px;top:396px" width="44" height="44"><circle cx="20" cy="20" r="17" fill="#5a5a5a" stroke="#333" stroke-width="2"/><circle cx="22" cy="20" r="13" fill="#e8e8e8" stroke="#888" stroke-width="2"/><path d="M16 12Q12 20 16 28M28 12Q32 20 28 28M22 10V30" stroke="#777" stroke-width="1.5" fill="none"/></svg><svg style="left:1784px;top:424px" width="10" height="14"><path d="M1 1L9 7L1 13Z" fill="#8a8a8a"/></svg><svg style="left:1752px;top:440px" width="44" height="44"><circle cx="20" cy="20" r="18" fill="#e8d030" stroke="#807010" stroke-width="2"/><path d="M4 22Q20 8 36 22Q20 34 4 22Z" fill="#f0f0f0" stroke="#333"/><circle cx="20" cy="19" r="6" fill="#888" stroke="#333"/></svg><svg style="left:1784px;top:470px" width="10" height="14"><path d="M1 1L9 7L1 13Z" fill="#8a8a8a"/></svg><div style="left:1748px;top:487px;width:45px;height:47px;background:#5f7592;border:1px solid #2a3a4a"></div><svg style="left:1758px;top:491px" width="28" height="42"><path d="M14 2A12 12 0 0 1 23 22Q19 26 19 30H9Q9 26 5 22A12 12 0 0 1 14 2Z" fill="#c8c8b8" stroke="#333" stroke-width="1.5"/><path d="M9 33H19M9 37H19M10 41H18" stroke="#ddd" stroke-width="2"/></svg><div style="left:1748px;top:543px;width:45px;height:47px;background:#5f7592;border:1px solid #2a3a4a"></div><svg style="left:1752px;top:547px" width="40" height="40"><path d="M4 10L20 3L36 10V30L20 38L4 30Z" fill="#e8e8e8" stroke="#222"/><path d="M4 10L12 7L20 11L12 14Z M20 11L28 7L36 10L28 14Z" fill="#111"/><path d="M4 10V20L12 24V14Z M20 21L28 25V35L20 38Z M20 11V21L28 17V14Z" fill="#222"/></svg><svg style="left:1784px;top:574px" width="10" height="14"><path d="M1 1L9 7L1 13Z" fill="#2a2a2a"/></svg><svg style="left:1750px;top:624px" width="46" height="40"><path d="M4 10Q14 4 26 14L40 18" fill="none" stroke="#eee" stroke-width="3"/><path d="M6 14Q2 28 12 26Q20 24 18 18Z M22 20Q20 32 32 30Q40 28 36 22Z" fill="#ddd" stroke="#222" stroke-width="1.5"/></svg><svg style="left:1778px;top:659px" width="14" height="9"><path d="M0 0H14L7 8Z" fill="#8a8a8a"/></svg><svg style="left:1752px;top:675px" width="40" height="36"><rect x="2" y="2" width="34" height="28" rx="6" fill="#1a2a50" stroke="#e8e8e8" stroke-width="3"/><rect x="13" y="9" width="4" height="14" fill="#fff"/><rect x="21" y="9" width="4" height="14" fill="#fff"/></svg><svg style="left:1752px;top:719px" width="44" height="42"><rect x="18" y="2" width="20" height="20" fill="#d0a0c0" stroke="#eee" stroke-width="2"/><rect x="10" y="8" width="20" height="20" fill="#c0c0c0" stroke="#eee" stroke-width="2"/><rect x="2" y="14" width="22" height="22" fill="#3a70b0" stroke="#eee" stroke-width="2"/><circle cx="13" cy="22" r="4" fill="#e8c070"/><path d="M5 34Q13 24 21 34Z" fill="#308030"/></svg><svg style="left:1778px;top:755px" width="14" height="9"><path d="M0 0H14L7 8Z" fill="#8a8a8a"/></svg><div style="left:1748px;top:781px;width:45px;height:45px;background:#5f7592;border:1px solid #2a3a4a"></div><div style="left:1748px;top:829px;width:45px;height:46px;background:#5f7592;border:1px solid #2a3a4a"></div><div style="left:1748px;top:878px;width:45px;height:45px;background:#5f7592;border:1px solid #2a3a4a"></div><div style="left:1748px;top:926px;width:45px;height:45px;background:#5f7592;border:1px solid #2a3a4a"></div><svg style="left:1752px;top:786px" width="42" height="38"><rect x="2" y="6" width="14" height="24" rx="3" fill="#5a90d8" stroke="#222"/><ellipse cx="9" cy="6" rx="7" ry="3" fill="#8ab8f0" stroke="#222"/><path d="M20 10L8 34H32Z" fill="#e8d020" stroke="#222"/><circle cx="30" cy="22" r="9" fill="#d82828" stroke="#222"/></svg><svg style="left:1784px;top:812px" width="10" height="14"><path d="M1 1L9 7L1 13Z" fill="#2a2a2a"/></svg><svg style="left:1752px;top:832px" width="42" height="42"><path d="M2 6L34 2L16 30Z" fill="none" stroke="#e8d020" stroke-width="3"/><path d="M4 6Q20 14 18 30" fill="none" stroke="#e8d020" stroke-width="2.5"/><path d="M18 20L34 36" stroke="#e8d020" stroke-width="3"/><path d="M28 38L38 38L36 28Z" fill="#e8d020"/></svg><svg style="left:1753px;top:881px" width="38.0" height="38.0" viewBox="0 0 40 40">
<circle cx="11" cy="13" r="8" fill="#2a2a2a" stroke="#111" stroke-width="1.5"/><circle cx="11" cy="13" r="3" fill="#777"/>
<circle cx="27" cy="10" r="8" fill="#2a2a2a" stroke="#111" stroke-width="1.5"/><circle cx="27" cy="10" r="3" fill="#777"/>
<rect x="12" y="20" width="18" height="14" fill="#2a2a2a" stroke="#111" stroke-width="1.5"/><rect x="17" y="24" width="8" height="7" fill="#999"/>
<path d="M30 24L38 20V34L30 30Z" fill="#2a2a2a" stroke="#111" stroke-width="1.5"/>
<path d="M12 24L3 22V34L12 32Z" fill="#2a2a2a" stroke="#111" stroke-width="1.5"/></svg><svg style="left:1752px;top:928px" width="40" height="40"><path d="M20 2L38 20L20 38L2 20Z" fill="#8a8a8a" stroke="#333" stroke-width="1.5"/><path d="M20 2L29 11L20 20L11 11Z M2 20L11 11L20 20L11 29Z" fill="#bbb"/><path d="M20 20L29 29L20 38L11 29Z" fill="#e8c020" stroke="#fff" stroke-width="2"/></svg><svg style="left:1752px;top:1462px" width="42" height="40"><path d="M2 20Q20 2 38 20Q20 38 2 20Z" fill="#f0f0f0" stroke="#222" stroke-width="2"/><circle cx="20" cy="20" r="8" fill="#111"/><circle cx="17" cy="17" r="2.5" fill="#fff"/></svg><svg style="left:1753px;top:1527px" width="38" height="38"><circle cx="19" cy="19" r="16" fill="#1e2a2a" stroke="#e8e8e8" stroke-width="3"/><text x="19" y="28" text-anchor="middle" font-family="Liberation Serif" font-style="italic" font-weight="bold" font-size="24" fill="#f0f0f0">i</text></svg><div style="left:1747px;top:1575px;width:47px;height:47px;background:#5f7592;border:1px solid #2a3a4a"></div><svg style="left:1753px;top:1581px" width="35" height="36"><rect x="1.5" y="1.5" width="32" height="33" fill="#f0dc40" stroke="#c8a000" stroke-width="3"/><rect x="5" y="5" width="25" height="26" fill="#dcdcdc"/><path d="M17.5 4V33M4 18H31" stroke="#3a3a44" stroke-width="2.5"/></svg><div style="left:1748px;top:593px;width:45px;height:1px;background:#505050"></div><svg style="left:1799px;top:742px" width="9" height="14"><path d="M8 1L1 7L8 13Z" fill="#8a8a8a"/></svg><svg style="left:1799px;top:867px" width="9" height="14"><path d="M1 1L8 7L1 13Z" fill="#8a8a8a"/></svg><svg style="left:1800px;top:790px" width="8" height="42"><path d="M2 1V41M6 1V41" stroke="#6a6a6a" stroke-width="1.5" stroke-dasharray="1.5 2.5"/></svg><svg style="left:3px;top:742px" width="9" height="14"><path d="M1 1L8 7L1 13Z" fill="#8a8a8a"/></svg><svg style="left:3px;top:867px" width="9" height="14"><path d="M1 1L8 7L1 13Z" fill="#8a8a8a"/></svg><svg style="left:4px;top:790px" width="8" height="42"><path d="M2 1V41M6 1V41" stroke="#6a6a6a" stroke-width="1.5" stroke-dasharray="1.5 2.5"/></svg><div style="left:1809px;top:158px;width:1647px;height:1466px;background:#303030"></div><div style="left:2107.0px;top:186.4px;font-size:43px;color:#474747;font-family:'Liberation Sans',sans-serif;transform:scaleX(0.9380);transform-origin:left;">Indie Edition</div><div style="left:2353.0px;top:187.9px;font-size:53px;color:#454545;font-family:'Liberation Sans',sans-serif;font-weight:bold;transform:scaleX(0.8472);transform-origin:left;">VEX Builder</div><div style="left:2638px;top:158px;width:818px;height:206px;background:#3a3a3a"></div><svg style="left:2642px;top:162px" width="44" height="44" viewBox="0 0 44 44">
<defs><clipPath id="cs2642162"><circle cx="22" cy="22" r="20"/></clipPath><radialGradient id="csg2642162" cx="0.35" cy="0.3" r="0.8"><stop offset="0" stop-color="#fff"/><stop offset="1" stop-color="#9aa"/></radialGradient></defs>
<g clip-path="url(#cs2642162)"><circle cx="22" cy="22" r="20" fill="url(#csg2642162)"/><g transform="translate(0,0)"><rect x="0.0" y="0.0" width="7.3" height="7.3" fill="#111"/><rect x="14.6" y="0.0" width="7.3" height="7.3" fill="#111"/><rect x="29.2" y="0.0" width="7.3" height="7.3" fill="#111"/><rect x="7.3" y="7.3" width="7.3" height="7.3" fill="#111"/><rect x="21.9" y="7.3" width="7.3" height="7.3" fill="#111"/><rect x="36.5" y="7.3" width="7.3" height="7.3" fill="#111"/><rect x="0.0" y="14.6" width="7.3" height="7.3" fill="#111"/><rect x="14.6" y="14.6" width="7.3" height="7.3" fill="#111"/><rect x="29.2" y="14.6" width="7.3" height="7.3" fill="#111"/><rect x="7.3" y="21.9" width="7.3" height="7.3" fill="#111"/><rect x="21.9" y="21.9" width="7.3" height="7.3" fill="#111"/><rect x="36.5" y="21.9" width="7.3" height="7.3" fill="#111"/><rect x="0.0" y="29.2" width="7.3" height="7.3" fill="#111"/><rect x="14.6" y="29.2" width="7.3" height="7.3" fill="#111"/><rect x="29.2" y="29.2" width="7.3" height="7.3" fill="#111"/><rect x="7.3" y="36.5" width="7.3" height="7.3" fill="#111"/><rect x="21.9" y="36.5" width="7.3" height="7.3" fill="#111"/><rect x="36.5" y="36.5" width="7.3" height="7.3" fill="#111"/></g></g>
<circle cx="22" cy="22" r="20" fill="none" stroke="#222" stroke-width="1.2"/></svg><svg style="left:2672px;top:199px" width="14" height="9"><path d="M0 0H14L7 8Z" fill="#8a8a8a"/></svg><div style="left:2691.0px;top:172.6px;font-size:24px;color:#dcdcdc;font-family:'Liberation Sans',sans-serif;font-weight:bold;transform:scaleX(0.9263);transform-origin:left;">Float Vertex Attribute</div><div style="left:2927px;top:168px;width:311px;height:36px;background:#111"></div><div style="left:2933.0px;top:176.5px;font-size:23px;color:#ececec;font-family:'Liberation Mono',monospace;transform:scaleX(0.9945);transform-origin:left;">Float_Vertex_Attribute</div><div style="left:3233px;top:168px;width:6px;height:36px;background:#111"></div><svg style="left:3250px;top:165px" width="40" height="40" viewBox="0 0 40 40"><g stroke="#222" stroke-width="0"><circle cx="20" cy="20" r="12.5" fill="#e4e4e4"/><rect x="16.2" y="1.5" width="7.6" height="12" rx="2.2" fill="#e4e4e4" transform="rotate(0.0 20 20)"/><rect x="16.2" y="1.5" width="7.6" height="12" rx="2.2" fill="#e4e4e4" transform="rotate(45.0 20 20)"/><rect x="16.2" y="1.5" width="7.6" height="12" rx="2.2" fill="#e4e4e4" transform="rotate(90.0 20 20)"/><rect x="16.2" y="1.5" width="7.6" height="12" rx="2.2" fill="#e4e4e4" transform="rotate(135.0 20 20)"/><rect x="16.2" y="1.5" width="7.6" height="12" rx="2.2" fill="#e4e4e4" transform="rotate(180.0 20 20)"/><rect x="16.2" y="1.5" width="7.6" height="12" rx="2.2" fill="#e4e4e4" transform="rotate(225.0 20 20)"/><rect x="16.2" y="1.5" width="7.6" height="12" rx="2.2" fill="#e4e4e4" transform="rotate(270.0 20 20)"/><rect x="16.2" y="1.5" width="7.6" height="12" rx="2.2" fill="#e4e4e4" transform="rotate(315.0 20 20)"/></g><circle cx="20" cy="20" r="5" fill="#3a3a3a"/></svg><svg style="left:3276px;top:199px" width="14" height="9"><path d="M0 0H14L7 8Z" fill="#8a8a8a"/></svg><svg style="left:3307px;top:166px" width="40" height="40" viewBox="0 0 40 40"><circle cx="16" cy="16" r="12" fill="#3a4a50" stroke="#e0e0e0" stroke-width="4"/><path d="M25 25L36 36" stroke="#e0e0e0" stroke-width="5" stroke-linecap="round"/></svg><svg style="left:3359px;top:165px" width="40" height="40" viewBox="0 0 40 40"><circle cx="20" cy="20" r="17" fill="#1e2a2a" stroke="#e8e8e8" stroke-width="3"/><text x="20" y="30" text-anchor="middle" font-family="Liberation Serif" font-style="italic" font-weight="bold" font-size="26" fill="#f0f0f0">i</text></svg><svg style="left:3411px;top:165px" width="40" height="40" viewBox="0 0 40 40"><circle cx="20" cy="20" r="17" fill="#1e2a2a" stroke="#e8e8e8" stroke-width="3"/><text x="20" y="29" text-anchor="middle" font-family="Liberation Sans" font-weight="bold" font-size="24" fill="#f0f0f0">?</text></svg><div style="left:2640px;top:208px;width:816px;height:2px;background:#202020"></div><div style="left:2863.0px;top:228.3px;font-size:22px;color:#cfcfcf;font-family:'Liberation Sans',sans-serif;transform:scaleX(0.9031);transform-origin:left;">Name</div><div style="left:2944px;top:221px;width:441px;height:36px;background:#121212"></div><div style="left:2952.0px;top:229.8px;font-size:24px;color:#f4f4f4;font-family:'Liberation Mono',monospace;font-weight:bold;transform:scaleX(0.9604);transform-origin:left;">attr_f</div><div style="left:3389px;top:220px;width:40px;height:38px;background:#4a4a4a"></div><svg style="left:3393px;top:223px" width="32" height="32" viewBox="0 0 40 40"><g stroke="#222" stroke-width="0"><circle cx="20" cy="20" r="12.5" fill="#e8e8e8"/><rect x="16.2" y="1.5" width="7.6" height="12" rx="2.2" fill="#e8e8e8" transform="rotate(0.0 20 20)"/><rect x="16.2" y="1.5" width="7.6" height="12" rx="2.2" fill="#e8e8e8" transform="rotate(45.0 20 20)"/><rect x="16.2" y="1.5" width="7.6" height="12" rx="2.2" fill="#e8e8e8" transform="rotate(90.0 20 20)"/><rect x="16.2" y="1.5" width="7.6" height="12" rx="2.2" fill="#e8e8e8" transform="rotate(135.0 20 20)"/><rect x="16.2" y="1.5" width="7.6" height="12" rx="2.2" fill="#e8e8e8" transform="rotate(180.0 20 20)"/><rect x="16.2" y="1.5" width="7.6" height="12" rx="2.2" fill="#e8e8e8" transform="rotate(225.0 20 20)"/><rect x="16.2" y="1.5" width="7.6" height="12" rx="2.2" fill="#e8e8e8" transform="rotate(270.0 20 20)"/><rect x="16.2" y="1.5" width="7.6" height="12" rx="2.2" fill="#e8e8e8" transform="rotate(315.0 20 20)"/></g><circle cx="20" cy="20" r="5" fill="#4a4a4a"/></svg><svg style="left:0;top:0" width="3456" height="1624">
<path d="M2459 414C2530 414 2515 860 2580 874" fill="none" stroke="#e8d020" stroke-width="1.6" stroke-dasharray="2 3"/>
<path d="M2151 1042C2225 1042 2205 431 2273 431" fill="none" stroke="#b8d040" stroke-width="1.6" stroke-dasharray="2 3"/>
<path d="M2765 874H2887" stroke="#c8907a" stroke-width="2"/>
</svg><div style="left:2274.0px;top:334.4px;font-size:23px;color:#d4d4d4;font-family:'Liberation Sans',sans-serif;transform:scaleX(1.0519);transform-origin:left;">Material_Standard_Surface1</div><div style="left:2273px;top:366px;width:186px;height:35px;background:#cbcbcb;border-radius:9px 9px 0 0"></div><div style="left:2273px;top:401px;width:186px;height:963px;background:linear-gradient(#303030,#3d3d3d 3px,#3d3d3d)"></div><div style="left:2273px;top:1364px;width:186px;height:18px;background:#cbcbcb;border-radius:0 0 11px 11px;border-top:1px solid #777"></div><svg style="left:2403px;top:366px" width="56" height="35"><path d="M3 35L8 1M19 35L24 1M35 35L40 1" stroke="#7a7a7a" stroke-width="1.1"/></svg><svg style="left:2387px;top:1368px" width="70" height="14"><path d="M6 2H14M6 6H14M6 10H14" stroke="#aaa" stroke-width="1.6"/><path d="M30 4H40M30 8H40" stroke="#222" stroke-width="1.8"/><path d="M54 3H64" stroke="#222" stroke-width="1.8"/></svg><svg style="left:2280px;top:369px" width="30" height="30" viewBox="0 0 30 30"><defs><clipPath id="msc"><circle cx="15" cy="15" r="13"/></clipPath></defs>
<g clip-path="url(#msc)"><rect width="30" height="30" fill="#e8e8e8"/><path d="M0 12L30 2V6L0 16Z" fill="#3060c0"/><path d="M0 20L30 10V14L0 24Z" fill="#d03030"/><path d="M0 27L30 17V21L0 31Z" fill="#40a050"/></g>
<circle cx="15" cy="15" r="13" fill="none" stroke="#333" stroke-width="1"/></svg><svg style="left:2267.2px;top:407.9px" width="11.6" height="11.6"><circle cx="5.8" cy="5.8" r="4.8" fill="#5cbf6a"/></svg><div style="left:2285.5px;top:406.3px;font-size:15px;color:#66b86e;transform:scaleX(0.92);transform-origin:left">base</div><svg style="left:2267.2px;top:425.3px" width="11.6" height="11.6"><circle cx="5.8" cy="5.8" r="4.8" fill="#5cbf6a"/></svg><div style="left:2285.5px;top:423.7px;font-size:15px;color:#66b86e;transform:scaleX(0.92);transform-origin:left">baseColor</div><svg style="left:2267.2px;top:442.59999999999997px" width="11.6" height="11.6"><circle cx="5.8" cy="5.8" r="4.8" fill="#5cbf6a"/></svg><div style="left:2285.5px;top:441.1px;font-size:15px;color:#66b86e;transform:scaleX(0.92);transform-origin:left">diffuseRoughness</div><svg style="left:2267.2px;top:460.0px" width="11.6" height="11.6"><circle cx="5.8" cy="5.8" r="4.8" fill="#3eaaf5"/></svg><div style="left:2285.5px;top:458.4px;font-size:15px;color:#4aa8e8;transform:scaleX(0.92);transform-origin:left">diffuseBrdf</div><svg style="left:2267.2px;top:477.3px" width="11.6" height="11.6"><circle cx="5.8" cy="5.8" r="4.8" fill="#5cbf6a"/></svg><div style="left:2285.5px;top:475.8px;font-size:15px;color:#66b86e;transform:scaleX(0.92);transform-origin:left">metallic</div><svg style="left:2267.2px;top:494.7px" width="11.6" height="11.6"><circle cx="5.8" cy="5.8" r="4.8" fill="#5cbf6a"/></svg><div style="left:2285.5px;top:493.1px;font-size:15px;color:#66b86e;transform:scaleX(0.92);transform-origin:left">specular</div><svg style="left:2267.2px;top:512.1px" width="11.6" height="11.6"><circle cx="5.8" cy="5.8" r="4.8" fill="#5cbf6a"/></svg><div style="left:2285.5px;top:510.5px;font-size:15px;color:#66b86e;transform:scaleX(0.92);transform-origin:left">specularColor</div><svg style="left:2267.2px;top:529.4000000000001px" width="11.6" height="11.6"><circle cx="5.8" cy="5.8" r="4.8" fill="#5cbf6a"/></svg><div style="left:2285.5px;top:527.9px;font-size:15px;color:#66b86e;transform:scaleX(0.92);transform-origin:left">roughness</div><svg style="left:2267.2px;top:546.8000000000001px" width="11.6" height="11.6"><circle cx="5.8" cy="5.8" r="4.8" fill="#5cbf6a"/></svg><div style="left:2285.5px;top:545.2px;font-size:15px;color:#66b86e;transform:scaleX(0.92);transform-origin:left">ior</div><svg style="left:2267.2px;top:564.1px" width="11.6" height="11.6"><circle cx="5.8" cy="5.8" r="4.8" fill="#5cbf6a"/></svg><div style="left:2285.5px;top:562.6px;font-size:15px;color:#66b86e;transform:scaleX(0.92);transform-origin:left">anisotropyTexture</div><svg style="left:2267.2px;top:581.5px" width="11.6" height="11.6"><circle cx="5.8" cy="5.8" r="4.8" fill="#5cbf6a"/></svg><div style="left:2285.5px;top:579.9px;font-size:15px;color:#66b86e;transform:scaleX(0.92);transform-origin:left">rotation</div><svg style="left:2267.2px;top:598.9000000000001px" width="11.6" height="11.6"><circle cx="5.8" cy="5.8" r="4.8" fill="#5cbf6a"/></svg><div style="left:2285.5px;top:597.3px;font-size:15px;color:#66b86e;transform:scaleX(0.92);transform-origin:left">transmission</div><svg style="left:2267.2px;top:616.2px" width="11.6" height="11.6"><circle cx="5.8" cy="5.8" r="4.8" fill="#5cbf6a"/></svg><div style="left:2285.5px;top:614.7px;font-size:15px;color:#66b86e;transform:scaleX(0.92);transform-origin:left">transmissionColor</div><svg style="left:2267.2px;top:633.6px" width="11.6" height="11.6"><circle cx="5.8" cy="5.8" r="4.8" fill="#5cbf6a"/></svg><div style="left:2285.5px;top:632.0px;font-size:15px;color:#66b86e;transform:scaleX(0.92);transform-origin:left">transmissionDepth</div><svg style="left:2267.2px;top:650.9000000000001px" width="11.6" height="11.6"><circle cx="5.8" cy="5.8" r="4.8" fill="#5cbf6a"/></svg><div style="left:2285.5px;top:649.4px;font-size:15px;color:#66b86e;transform:scaleX(0.92);transform-origin:left">scattering</div><svg style="left:2267.2px;top:668.3000000000001px" width="11.6" height="11.6"><circle cx="5.8" cy="5.8" r="4.8" fill="#55d0c0"/></svg><div style="left:2285.5px;top:666.7px;font-size:15px;color:#4fc4b4;transform:scaleX(0.92);transform-origin:left">scatteringAnisotropy</div><svg style="left:2267.2px;top:685.7px" width="11.6" height="11.6"><circle cx="5.8" cy="5.8" r="4.8" fill="#55d0c0"/></svg><div style="left:2285.5px;top:684.1px;font-size:15px;color:#4fc4b4;transform:scaleX(0.92);transform-origin:left">dispersion_coefficient_B</div><svg style="left:2267.2px;top:703.0px" width="11.6" height="11.6"><circle cx="5.8" cy="5.8" r="4.8" fill="#3eaaf5"/></svg><div style="left:2285.5px;top:701.5px;font-size:15px;color:#4aa8e8;transform:scaleX(0.92);transform-origin:left">dispersionMode</div><svg style="left:2267.2px;top:720.4000000000001px" width="11.6" height="11.6"><circle cx="5.8" cy="5.8" r="4.8" fill="#5cbf6a"/></svg><div style="left:2285.5px;top:718.8px;font-size:15px;color:#66b86e;transform:scaleX(0.92);transform-origin:left">roughnessExtra</div><svg style="left:2267.2px;top:737.7px" width="11.6" height="11.6"><circle cx="5.8" cy="5.8" r="4.8" fill="#3eaaf5"/></svg><div style="left:2285.5px;top:736.2px;font-size:15px;color:#4aa8e8;transform:scaleX(0.92);transform-origin:left">priority</div><svg style="left:2267.2px;top:755.1px" width="11.6" height="11.6"><circle cx="5.8" cy="5.8" r="4.8" fill="#3eaaf5"/></svg><div style="left:2285.5px;top:753.5px;font-size:15px;color:#4aa8e8;transform:scaleX(0.92);transform-origin:left">fake_shadows</div><svg style="left:2267.2px;top:772.5px" width="11.6" height="11.6"><circle cx="5.8" cy="5.8" r="4.8" fill="#3eaaf5"/></svg><div style="left:2285.5px;top:770.9px;font-size:15px;color:#4aa8e8;transform:scaleX(0.92);transform-origin:left">refractionAlpha</div><svg style="left:2267.2px;top:789.8000000000001px" width="11.6" height="11.6"><circle cx="5.8" cy="5.8" r="4.8" fill="#3eaaf5"/></svg><div style="left:2285.5px;top:788.3px;font-size:15px;color:#4aa8e8;transform:scaleX(0.92);transform-origin:left">hasCaustics</div><svg style="left:2267.2px;top:807.2px" width="11.6" height="11.6"><circle cx="5.8" cy="5.8" r="4.8" fill="#5cbf6a"/></svg><div style="left:2285.5px;top:805.6px;font-size:15px;color:#66b86e;transform:scaleX(0.92);transform-origin:left">subsurface</div><svg style="left:2267.2px;top:824.5px" width="11.6" height="11.6"><circle cx="5.8" cy="5.8" r="4.8" fill="#5cbf6a"/></svg><div style="left:2285.5px;top:823.0px;font-size:15px;color:#66b86e;transform:scaleX(0.92);transform-origin:left">subsurfaceColor</div><svg style="left:2267.2px;top:841.9000000000001px" width="11.6" height="11.6"><circle cx="5.8" cy="5.8" r="4.8" fill="#5cbf6a"/></svg><div style="left:2285.5px;top:840.4px;font-size:15px;color:#66b86e;transform:scaleX(0.92);transform-origin:left">radius</div><svg style="left:2267.2px;top:859.3000000000001px" width="11.6" height="11.6"><circle cx="5.8" cy="5.8" r="4.8" fill="#55d0c0"/></svg><div style="left:2285.5px;top:857.7px;font-size:15px;color:#4fc4b4;transform:scaleX(0.92);transform-origin:left">scale</div><svg style="left:2267.2px;top:876.6px" width="11.6" height="11.6"><circle cx="5.8" cy="5.8" r="4.8" fill="#55d0c0"/></svg><div style="left:2285.5px;top:875.1px;font-size:15px;color:#4fc4b4;transform:scaleX(0.92);transform-origin:left">subsurfaceAnisotropy</div><svg style="left:2267.2px;top:894.0px" width="11.6" height="11.6"><circle cx="5.8" cy="5.8" r="4.8" fill="#b4b4b4"/></svg><div style="left:2285.5px;top:892.4px;font-size:15px;color:#b0b0b0;transform:scaleX(0.92);transform-origin:left">medium</div><svg style="left:2267.2px;top:911.3000000000001px" width="11.6" height="11.6"><circle cx="5.8" cy="5.8" r="4.8" fill="#5cbf6a"/></svg><div style="left:2285.5px;top:909.8px;font-size:15px;color:#66b86e;transform:scaleX(0.92);transform-origin:left">coating</div><svg style="left:2267.2px;top:928.7px" width="11.6" height="11.6"><circle cx="5.8" cy="5.8" r="4.8" fill="#5cbf6a"/></svg><div style="left:2285.5px;top:927.1px;font-size:15px;color:#66b86e;transform:scaleX(0.92);transform-origin:left">coatingColor</div><svg style="left:2267.2px;top:946.1px" width="11.6" height="11.6"><circle cx="5.8" cy="5.8" r="4.8" fill="#5cbf6a"/></svg><div style="left:2285.5px;top:944.5px;font-size:15px;color:#66b86e;transform:scaleX(0.92);transform-origin:left">coatingRoughness</div><svg style="left:2267.2px;top:963.4000000000001px" width="11.6" height="11.6"><circle cx="5.8" cy="5.8" r="4.8" fill="#5cbf6a"/></svg><div style="left:2285.5px;top:961.9px;font-size:15px;color:#66b86e;transform:scaleX(0.92);transform-origin:left">coatingIor</div><svg style="left:2267.2px;top:980.8000000000001px" width="11.6" height="11.6"><circle cx="5.8" cy="5.8" r="4.8" fill="#5cbf6a"/></svg><div style="left:2285.5px;top:979.2px;font-size:15px;color:#66b86e;transform:scaleX(0.92);transform-origin:left">coatingAnisotropy</div><svg style="left:2267.2px;top:998.1px" width="11.6" height="11.6"><circle cx="5.8" cy="5.8" r="4.8" fill="#5cbf6a"/></svg><div style="left:2285.5px;top:996.6px;font-size:15px;color:#66b86e;transform:scaleX(0.92);transform-origin:left">coatingRotation</div><svg style="left:2267.2px;top:1015.5px" width="11.6" height="11.6"><circle cx="5.8" cy="5.8" r="4.8" fill="#5cbf6a"/></svg><div style="left:2285.5px;top:1013.9px;font-size:15px;color:#66b86e;transform:scaleX(0.92);transform-origin:left">coatingBump</div><svg style="left:2267.2px;top:1032.9px" width="11.6" height="11.6"><circle cx="5.8" cy="5.8" r="4.8" fill="#5cbf6a"/></svg><div style="left:2285.5px;top:1031.3px;font-size:15px;color:#66b86e;transform:scaleX(0.92);transform-origin:left">coatingNormal</div><svg style="left:2267.2px;top:1050.2px" width="11.6" height="11.6"><circle cx="5.8" cy="5.8" r="4.8" fill="#5cbf6a"/></svg><div style="left:2285.5px;top:1048.7px;font-size:15px;color:#66b86e;transform:scaleX(0.92);transform-origin:left">sheen</div><svg style="left:2267.2px;top:1067.6000000000001px" width="11.6" height="11.6"><circle cx="5.8" cy="5.8" r="4.8" fill="#5cbf6a"/></svg><div style="left:2285.5px;top:1066.0px;font-size:15px;color:#66b86e;transform:scaleX(0.92);transform-origin:left">sheenColor</div><svg style="left:2267.2px;top:1084.9px" width="11.6" height="11.6"><circle cx="5.8" cy="5.8" r="4.8" fill="#5cbf6a"/></svg><div style="left:2285.5px;top:1083.4px;font-size:15px;color:#66b86e;transform:scaleX(0.92);transform-origin:left">sheenRoughness</div><svg style="left:2267.2px;top:1102.3px" width="11.6" height="11.6"><circle cx="5.8" cy="5.8" r="4.8" fill="#5cbf6a"/></svg><div style="left:2285.5px;top:1100.8px;font-size:15px;color:#66b86e;transform:scaleX(0.92);transform-origin:left">emissionWeight</div><svg style="left:2267.2px;top:1119.7px" width="11.6" height="11.6"><circle cx="5.8" cy="5.8" r="4.8" fill="#5cbf6a"/></svg><div style="left:2285.5px;top:1118.1px;font-size:15px;color:#66b86e;transform:scaleX(0.92);transform-origin:left">emissionColor</div><svg style="left:2267.2px;top:1137.0px" width="11.6" height="11.6"><circle cx="5.8" cy="5.8" r="4.8" fill="#e4e090"/></svg><div style="left:2285.5px;top:1135.5px;font-size:15px;color:#e0dc98;transform:scaleX(0.92);transform-origin:left">emission</div><svg style="left:2267.2px;top:1154.4px" width="11.6" height="11.6"><circle cx="5.8" cy="5.8" r="4.8" fill="#5cbf6a"/></svg><div style="left:2285.5px;top:1152.8px;font-size:15px;color:#66b86e;transform:scaleX(0.92);transform-origin:left">filmwidth</div><svg style="left:2267.2px;top:1171.7px" width="11.6" height="11.6"><circle cx="5.8" cy="5.8" r="4.8" fill="#5cbf6a"/></svg><div style="left:2285.5px;top:1170.2px;font-size:15px;color:#66b86e;transform:scaleX(0.92);transform-origin:left">filmIor</div><svg style="left:2267.2px;top:1189.1000000000001px" width="11.6" height="11.6"><circle cx="5.8" cy="5.8" r="4.8" fill="#3eaaf5"/></svg><div style="left:2285.5px;top:1187.5px;font-size:15px;color:#4aa8e8;transform:scaleX(0.92);transform-origin:left">thinWall</div><svg style="left:2267.2px;top:1206.5px" width="11.6" height="11.6"><circle cx="5.8" cy="5.8" r="4.8" fill="#5cbf6a"/></svg><div style="left:2285.5px;top:1204.9px;font-size:15px;color:#66b86e;transform:scaleX(0.92);transform-origin:left">bump</div><svg style="left:2267.2px;top:1223.8px" width="11.6" height="11.6"><circle cx="5.8" cy="5.8" r="4.8" fill="#55d0c0"/></svg><div style="left:2285.5px;top:1222.3px;font-size:15px;color:#4fc4b4;transform:scaleX(0.92);transform-origin:left">bumpHeight</div><svg style="left:2267.2px;top:1241.2px" width="11.6" height="11.6"><circle cx="5.8" cy="5.8" r="4.8" fill="#5cbf6a"/></svg><div style="left:2285.5px;top:1239.6px;font-size:15px;color:#66b86e;transform:scaleX(0.92);transform-origin:left">normal</div><svg style="left:2267.2px;top:1258.5px" width="11.6" height="11.6"><circle cx="5.8" cy="5.8" r="4.8" fill="#a8b4e4"/></svg><div style="left:2285.5px;top:1257.0px;font-size:15px;color:#aab0d8;transform:scaleX(0.92);transform-origin:left">displacement</div><svg style="left:2267.2px;top:1275.9px" width="11.6" height="11.6"><circle cx="5.8" cy="5.8" r="4.8" fill="#3eaaf5"/></svg><div style="left:2285.5px;top:1274.4px;font-size:15px;color:#4aa8e8;transform:scaleX(0.92);transform-origin:left">smooth</div><svg style="left:2267.2px;top:1293.3px" width="11.6" height="11.6"><circle cx="5.8" cy="5.8" r="4.8" fill="#3eaaf5"/></svg><div style="left:2285.5px;top:1291.7px;font-size:15px;color:#4aa8e8;transform:scaleX(0.92);transform-origin:left">smoothShadowTerminator</div><svg style="left:2267.2px;top:1310.6000000000001px" width="11.6" height="11.6"><circle cx="5.8" cy="5.8" r="4.8" fill="#60d8a0"/></svg><div style="left:2285.5px;top:1309.1px;font-size:15px;color:#62c8a0;transform:scaleX(0.92);transform-origin:left">roundEdges</div><svg style="left:2267.2px;top:1328.0px" width="11.6" height="11.6"><circle cx="5.8" cy="5.8" r="4.8" fill="#5cbf6a"/></svg><div style="left:2285.5px;top:1326.4px;font-size:15px;color:#66b86e;transform:scaleX(0.92);transform-origin:left">opacity</div><svg style="left:2267.2px;top:1345.3px" width="11.6" height="11.6"><circle cx="5.8" cy="5.8" r="4.8" fill="#e8e8e8"/></svg><div style="left:2285.5px;top:1343.8px;font-size:15px;color:#dcdcdc;transform:scaleX(0.92);transform-origin:left">layer</div><div style="right:1010px;top:406.3px;font-size:15px;color:#d8d020;transform:scaleX(0.92);transform-origin:right">NT_MAT_S...</div><svg style="left:2452.8px;top:407.8px" width="12.4" height="12.4"><circle cx="6.2" cy="6.2" r="5.2" fill="#f0dc10"/></svg><div style="left:1810.0px;top:482.0px;font-size:20px;color:#6a6a6a;font-family:'Liberation Sans',sans-serif;transform:scaleX(1.0532);transform-origin:left;">Subnet Inputs</div><div style="left:1810.0px;top:503.6px;font-size:24px;color:#e4e4e4;font-family:'Liberation Sans',sans-serif;transform:scaleX(1.0461);transform-origin:left;">inputs</div><div style="left:1810px;top:537px;width:184px;height:35px;background:#cbcbcb;border-radius:9px 9px 0 0"></div><svg style="left:1938px;top:537px" width="56" height="35"><path d="M3 35L8 1M19 35L24 1M35 35L40 1" stroke="#7a7a7a" stroke-width="1.1"/></svg><svg style="left:1815px;top:539px" width="32" height="32" viewBox="0 0 32 32">
<path d="M4 16L14 12L28 15L18 19Z" fill="#e8c078"/><path d="M4 16L18 19V30L6 27Z" fill="#d8a050"/><path d="M18 19L28 15V26L18 30Z" fill="#c08838"/>
<path d="M8 14L5 3M12 13L12 2M16 13L19 3M20 14L25 4" stroke="#5aa830" stroke-width="1.6"/></svg><div style="left:1810px;top:572px;width:184px;height:9px;background:#3d3d3d;border-top:2px solid #6a6a6a"></div><div style="left:1810px;top:581px;width:184px;height:18px;background:#cbcbcb;border-radius:0 0 11px 11px;border-top:2px solid #6a6a6a"></div><svg style="left:1922px;top:585px" width="70" height="14"><path d="M6 2H14M6 6H14M6 10H14" stroke="#aaa" stroke-width="1.6"/><path d="M30 4H40M30 8H40" stroke="#222" stroke-width="1.8"/><path d="M54 3H64" stroke="#222" stroke-width="1.8"/></svg><div style="left:1967.0px;top:802.5px;font-size:23px;color:#d4d4d4;font-family:'Liberation Sans',sans-serif;transform:scaleX(1.0606);transform-origin:left;">Color_Vertex_Attribute1</div><div style="left:1966px;top:834px;width:185px;height:35px;background:#cbcbcb;border-radius:9px 9px 0 0"></div><div style="left:1966px;top:869px;width:185px;height:27px;background:linear-gradient(#303030,#3d3d3d 3px,#3d3d3d)"></div><div style="left:1966px;top:896px;width:185px;height:18px;background:#cbcbcb;border-radius:0 0 11px 11px;border-top:1px solid #777"></div><svg style="left:2095px;top:834px" width="56" height="35"><path d="M3 35L8 1M19 35L24 1M35 35L40 1" stroke="#7a7a7a" stroke-width="1.1"/></svg><svg style="left:2079px;top:900px" width="70" height="14"><path d="M6 2H14M6 6H14M6 10H14" stroke="#aaa" stroke-width="1.6"/><path d="M30 4H40M30 8H40" stroke="#222" stroke-width="1.8"/><path d="M54 3H64" stroke="#222" stroke-width="1.8"/></svg><svg style="left:1974px;top:838px" width="28" height="28" viewBox="0 0 44 44">
<defs><clipPath id="cs1974838"><circle cx="22" cy="22" r="20"/></clipPath><radialGradient id="csg1974838" cx="0.35" cy="0.3" r="0.8"><stop offset="0" stop-color="#fff"/><stop offset="1" stop-color="#9aa"/></radialGradient></defs>
<g clip-path="url(#cs1974838)"><circle cx="22" cy="22" r="20" fill="url(#csg1974838)"/><g transform="translate(0,0)"><rect x="0.0" y="0.0" width="7.3" height="7.3" fill="#111"/><rect x="14.6" y="0.0" width="7.3" height="7.3" fill="#111"/><rect x="29.2" y="0.0" width="7.3" height="7.3" fill="#111"/><rect x="7.3" y="7.3" width="7.3" height="7.3" fill="#111"/><rect x="21.9" y="7.3" width="7.3" height="7.3" fill="#111"/><rect x="36.5" y="7.3" width="7.3" height="7.3" fill="#111"/><rect x="0.0" y="14.6" width="7.3" height="7.3" fill="#111"/><rect x="14.6" y="14.6" width="7.3" height="7.3" fill="#111"/><rect x="29.2" y="14.6" width="7.3" height="7.3" fill="#111"/><rect x="7.3" y="21.9" width="7.3" height="7.3" fill="#111"/><rect x="21.9" y="21.9" width="7.3" height="7.3" fill="#111"/><rect x="36.5" y="21.9" width="7.3" height="7.3" fill="#111"/><rect x="0.0" y="29.2" width="7.3" height="7.3" fill="#111"/><rect x="14.6" y="29.2" width="7.3" height="7.3" fill="#111"/><rect x="29.2" y="29.2" width="7.3" height="7.3" fill="#111"/><rect x="7.3" y="36.5" width="7.3" height="7.3" fill="#111"/><rect x="21.9" y="36.5" width="7.3" height="7.3" fill="#111"/><rect x="36.5" y="36.5" width="7.3" height="7.3" fill="#111"/></g></g>
<circle cx="22" cy="22" r="20" fill="none" stroke="#222" stroke-width="1.2"/></svg><svg style="left:1960.2px;top:876.7px" width="11.6" height="11.6"><circle cx="5.8" cy="5.8" r="4.8" fill="#c8ac8c"/></svg><div style="left:1978px;top:875.1px;font-size:15px;color:#c8b090;transform:scaleX(0.92);transform-origin:left">name</div><div style="right:1317px;top:875.1px;font-size:15px;color:#5cbf6a;transform:scaleX(0.92);transform-origin:right">NT_TEX_C...</div><svg style="left:2144.8px;top:876.3px" width="12.4" height="12.4"><circle cx="6.2" cy="6.2" r="5.2" fill="#5cbf6a"/></svg><div style="left:1967.0px;top:962.5px;font-size:23px;color:#d4d4d4;font-family:'Liberation Sans',sans-serif;transform:scaleX(1.0692);transform-origin:left;">Float_Vertex_Attribute1</div><div style="left:1962px;top:991px;width:193px;height:87px;border:4px solid #f0c800;border-radius:13px"></div><div style="left:1966px;top:995px;width:185px;height:35px;background:#cbcbcb;border-radius:9px 9px 0 0"></div><div style="left:1966px;top:1030px;width:185px;height:27px;background:linear-gradient(#303030,#3d3d3d 3px,#3d3d3d)"></div><div style="left:1966px;top:1057px;width:185px;height:18px;background:#cbcbcb;border-radius:0 0 11px 11px;border-top:1px solid #777"></div><svg style="left:2095px;top:995px" width="56" height="35"><path d="M3 35L8 1M19 35L24 1M35 35L40 1" stroke="#7a7a7a" stroke-width="1.1"/></svg><svg style="left:2079px;top:1061px" width="70" height="14"><path d="M6 2H14M6 6H14M6 10H14" stroke="#aaa" stroke-width="1.6"/><path d="M30 4H40M30 8H40" stroke="#222" stroke-width="1.8"/><path d="M54 3H64" stroke="#222" stroke-width="1.8"/></svg><svg style="left:1974px;top:999px" width="28" height="28" viewBox="0 0 44 44">
<defs><clipPath id="cs1974999"><circle cx="22" cy="22" r="20"/></clipPath><radialGradient id="csg1974999" cx="0.35" cy="0.3" r="0.8"><stop offset="0" stop-color="#fff"/><stop offset="1" stop-color="#9aa"/></radialGradient></defs>
<g clip-path="url(#cs1974999)"><circle cx="22" cy="22" r="20" fill="url(#csg1974999)"/><g transform="translate(0,0)"><rect x="0.0" y="0.0" width="7.3" height="7.3" fill="#111"/><rect x="14.6" y="0.0" width="7.3" height="7.3" fill="#111"/><rect x="29.2" y="0.0" width="7.3" height="7.3" fill="#111"/><rect x="7.3" y="7.3" width="7.3" height="7.3" fill="#111"/><rect x="21.9" y="7.3" width="7.3" height="7.3" fill="#111"/><rect x="36.5" y="7.3" width="7.3" height="7.3" fill="#111"/><rect x="0.0" y="14.6" width="7.3" height="7.3" fill="#111"/><rect x="14.6" y="14.6" width="7.3" height="7.3" fill="#111"/><rect x="29.2" y="14.6" width="7.3" height="7.3" fill="#111"/><rect x="7.3" y="21.9" width="7.3" height="7.3" fill="#111"/><rect x="21.9" y="21.9" width="7.3" height="7.3" fill="#111"/><rect x="36.5" y="21.9" width="7.3" height="7.3" fill="#111"/><rect x="0.0" y="29.2" width="7.3" height="7.3" fill="#111"/><rect x="14.6" y="29.2" width="7.3" height="7.3" fill="#111"/><rect x="29.2" y="29.2" width="7.3" height="7.3" fill="#111"/><rect x="7.3" y="36.5" width="7.3" height="7.3" fill="#111"/><rect x="21.9" y="36.5" width="7.3" height="7.3" fill="#111"/><rect x="36.5" y="36.5" width="7.3" height="7.3" fill="#111"/></g></g>
<circle cx="22" cy="22" r="20" fill="none" stroke="#222" stroke-width="1.2"/></svg><svg style="left:1960.2px;top:1037.7px" width="11.6" height="11.6"><circle cx="5.8" cy="5.8" r="4.8" fill="#c8ac8c"/></svg><div style="left:1978px;top:1036.2px;font-size:15px;color:#c8b090;transform:scaleX(0.92);transform-origin:left">name</div><div style="right:1317px;top:1036.2px;font-size:15px;color:#5cbf6a;transform:scaleX(0.92);transform-origin:right">NT_TEX_FL...</div><svg style="left:2144.8px;top:1037.3px" width="12.4" height="12.4"><circle cx="6.2" cy="6.2" r="5.2" fill="#5cbf6a"/></svg><div style="left:2580.0px;top:792.8px;font-size:25px;color:#d4d4d4;font-family:'Liberation Sans',sans-serif;transform:scaleX(1.0006);transform-origin:left;">octane_material</div><div style="left:2580px;top:826px;width:185px;height:35px;background:#cbcbcb;border-radius:9px 9px 0 0"></div><div style="left:2580px;top:861px;width:185px;height:43px;background:linear-gradient(#303030,#3d3d3d 3px,#3d3d3d)"></div><div style="left:2580px;top:904px;width:185px;height:18px;background:#cbcbcb;border-radius:0 0 11px 11px;border-top:1px solid #777"></div><svg style="left:2709px;top:826px" width="56" height="35"><path d="M3 35L8 1M19 35L24 1M35 35L40 1" stroke="#7a7a7a" stroke-width="1.1"/></svg><svg style="left:2693px;top:908px" width="70" height="14"><path d="M6 2H14M6 6H14M6 10H14" stroke="#aaa" stroke-width="1.6"/><path d="M30 4H40M30 8H40" stroke="#222" stroke-width="1.8"/><path d="M54 3H64" stroke="#222" stroke-width="1.8"/></svg><svg style="left:2586px;top:828px" width="32" height="32" viewBox="0 0 32 32"><path d="M6 30L3 4" stroke="#bbb" stroke-width="2"/>
<path d="M4 4Q12 0 18 5Q24 9 30 5L30 18Q24 22 18 18Q12 13 5 17Z" fill="#e8e8e8" stroke="#222" stroke-width="1"/>
<path d="M8 3V15M13 3V15M18 5V18M23 7V19M4 8H30M5 13H30" stroke="#222" stroke-width="2.5" stroke-dasharray="3 3"/></svg><svg style="left:2573.8px;top:867.8px" width="12.4" height="12.4"><circle cx="6.2" cy="6.2" r="5.2" fill="#f0dc10"/></svg><div style="left:2592px;top:866.6px;font-size:15px;color:#e0d020;transform:scaleX(0.92);transform-origin:left">material</div><svg style="left:2574.2px;top:885.2px" width="11.6" height="11.6"><circle cx="5.8" cy="5.8" r="4.8" fill="#b0b0b0"/></svg><div style="left:2592px;top:883.6px;font-size:15px;color:#aaaaaa;transform:scaleX(0.92);transform-origin:left">medium</div><div style="right:703px;top:866.6px;font-size:15px;color:#e0b090;transform:scaleX(0.92);transform-origin:right">shader</div><svg style="left:2758.8px;top:867.8px" width="12.4" height="12.4"><circle cx="6.2" cy="6.2" r="5.2" fill="#e8b090"/></svg><div style="left:2888.0px;top:771.0px;font-size:20px;color:#6a6a6a;font-family:'Liberation Sans',sans-serif;transform:scaleX(1.0505);transform-origin:left;">Subnet Outputs</div><div style="left:2888.0px;top:793.6px;font-size:24px;color:#e4e4e4;font-family:'Liberation Sans',sans-serif;transform:scaleX(1.0542);transform-origin:left;">outputs</div><div style="left:2887px;top:826px;width:186px;height:35px;background:#cbcbcb;border-radius:9px 9px 0 0"></div><div style="left:2887px;top:861px;width:186px;height:43px;background:linear-gradient(#303030,#3d3d3d 3px,#3d3d3d)"></div><div style="left:2887px;top:904px;width:186px;height:18px;background:#cbcbcb;border-radius:0 0 11px 11px;border-top:1px solid #777"></div><svg style="left:3017px;top:826px" width="56" height="35"><path d="M3 35L8 1M19 35L24 1M35 35L40 1" stroke="#7a7a7a" stroke-width="1.1"/></svg><svg style="left:3001px;top:908px" width="70" height="14"><path d="M6 2H14M6 6H14M6 10H14" stroke="#aaa" stroke-width="1.6"/><path d="M30 4H40M30 8H40" stroke="#222" stroke-width="1.8"/><path d="M54 3H64" stroke="#222" stroke-width="1.8"/></svg><svg style="left:2893px;top:828px" width="34" height="34" viewBox="0 0 34 34">
<path d="M6 22L16 18L28 21L18 25Z" fill="#e8c078"/><path d="M6 22L18 25V33L8 31Z" fill="#d8a050"/><path d="M18 25L28 21V30L18 33Z" fill="#c08838"/>
<path d="M10 2Q16 0 20 3Q25 6 30 3V13Q25 16 20 13Q15 10 11 12Z" fill="#e8e8e8" stroke="#222" stroke-width="1"/>
<path d="M13 2V12M18 2V13M23 4V14M11 6H30M11 10H30" stroke="#222" stroke-width="2" stroke-dasharray="2.5 2.5"/></svg><svg style="left:2880.8px;top:867.8px" width="12.4" height="12.4"><circle cx="6.2" cy="6.2" r="5.2" fill="#e8b090"/></svg><div style="left:2899px;top:866.6px;font-size:15px;color:#e0b090;transform:scaleX(0.92);transform-origin:left">shader</div><svg style="left:2881.2px;top:885.2px" width="11.6" height="11.6"><circle cx="5.8" cy="5.8" r="4.8" fill="#e8e8e8"/></svg><div style="left:2899px;top:883.6px;font-size:15px;color:#e0e0e0;transform:scaleX(0.92);transform-origin:left">next</div><svg style="left:2830px;top:112px" width="42" height="42"><path d="M6 34L26 14" stroke="#c8c8c8" stroke-width="6" stroke-linecap="round"/><circle cx="29" cy="11" r="8" fill="none" stroke="#d8d8d8" stroke-width="5"/><path d="M8 8L34 34" stroke="#999" stroke-width="5" stroke-linecap="round"/><circle cx="33" cy="33" r="4" fill="#ddd" stroke="#333"/></svg><svg style="left:2884px;top:114px" width="30" height="38"><rect x="2" y="1" width="8" height="8" fill="#f0f0f0"/><path d="M6 9V34M6 16H14M6 25H14M6 34H14" stroke="#bbb" stroke-width="2"/><rect x="14" y="12" width="12" height="8" fill="#c8d4c8"/><rect x="14" y="21" width="12" height="8" fill="#c8d4c8"/><rect x="14" y="30" width="12" height="8" fill="#c8d4c8"/></svg><svg style="left:2930px;top:112px" width="36" height="42"><rect x="1" y="1" width="33" height="39" fill="#e0e8e0" stroke="#333"/><path d="M2 8H33M2 16H33M2 24H33M2 32H33" stroke="#a8bca8" stroke-width="4"/></svg><svg style="left:3008px;top:114px" width="38" height="38"><rect x="1" y="1" width="34" height="34" fill="#f4f4f4" stroke="#333"/><rect x="4" y="4" width="8" height="8" fill="#c00000"/><rect x="14" y="4" width="8" height="8" fill="#e06020"/><rect x="24" y="4" width="8" height="8" fill="#e0c020"/><rect x="4" y="14" width="8" height="8" fill="#204080"/><rect x="14" y="14" width="8" height="8" fill="#40b030"/><rect x="24" y="14" width="8" height="8" fill="#6090d0"/><rect x="4" y="24" width="8" height="8" fill="#111"/><rect x="14" y="24" width="8" height="8" fill="#888"/><rect x="24" y="24" width="8" height="8" fill="#c8e0c8"/></svg><svg style="left:3057px;top:114px" width="38" height="38"><rect x="1" y="1" width="34" height="34" fill="#3a3a3a" stroke="#888" stroke-width="2"/><rect x="6" y="6" width="10" height="6" fill="#ccc"/><ellipse cx="26" cy="9" rx="6" ry="4" fill="#ccc"/><path d="M6 24L16 20V26H6Z M22 26L28 18L32 26Z M6 32Q11 26 16 32Z M22 30H32V32H22Z" fill="#ccc"/></svg><svg style="left:3138px;top:112px" width="40" height="40"><rect x="1" y="1" width="37" height="37" fill="#e0e0e0" stroke="#222" stroke-width="2"/><rect x="2" y="2" width="35" height="4" fill="#888"/><rect x="6" y="12" width="16" height="8" fill="#fff" stroke="#222" stroke-width="2"/><rect x="16" y="26" width="18" height="8" fill="#fff" stroke="#222" stroke-width="2"/></svg><svg style="left:3185px;top:111px" width="40" height="42"><path d="M1 1H38V30L28 40H1Z" fill="#e8d040" stroke="#8a7010" stroke-width="2"/><path d="M7 10H30M7 17H28M7 24H24" stroke="#222" stroke-width="3"/></svg><svg style="left:3233px;top:112px" width="42" height="42"><rect x="1" y="1" width="34" height="32" fill="#5a90d0" stroke="#ccc" stroke-width="2"/><circle cx="11" cy="11" r="4" fill="#e8e020"/><path d="M3 31L14 18L22 26L34 14V31Z" fill="#a0d0d0"/><path d="M32 28V40M26 34H38" stroke="#fff" stroke-width="4"/><path d="M32 28V40M26 34H38" stroke="#111" stroke-width="2"/></svg><svg style="left:3280px;top:112px" width="44" height="36"><path d="M4 12L22 4L40 12L22 20Z" fill="#f0a848"/><path d="M6 14H38V32H6Z" fill="#d08020" stroke="#8a4a10"/><path d="M6 20H38" stroke="#f0b060" stroke-width="3"/></svg><svg style="left:3364px;top:112px" width="40" height="40" viewBox="0 0 40 40"><circle cx="16" cy="16" r="12" fill="#3a4a50" stroke="#e0e0e0" stroke-width="4"/><path d="M25 25L36 36" stroke="#e0e0e0" stroke-width="5" stroke-linecap="round"/></svg><svg style="left:3411px;top:112px" width="45" height="40"><rect x="1" y="1" width="44" height="38" fill="#e8e8e8" stroke="#222"/><rect x="2" y="2" width="42" height="5" fill="#999"/><path d="M4 23Q22 8 42 23Q22 36 4 23Z" fill="#fff" stroke="#222" stroke-width="2"/><circle cx="22" cy="22" r="7" fill="#111"/></svg><div style="left:0px;top:1624px;width:3456px;height:141px;background:#2e2e2e"></div><div style="left:0px;top:1624px;width:3456px;height:2px;background:#5c5c5c"></div><div style="left:0px;top:1626px;width:20px;height:139px;background:linear-gradient(90deg,#444,#333);border-right:1px solid #222"></div><svg style="left:4px;top:1745px" width="14" height="12"><path d="M1 1H13L7 11Z" fill="#111"/></svg><div style="left:26px;top:1643px;width:54px;height:54px;background:linear-gradient(#464646,#383838);border:1px solid #222;border-top-color:#4a4a4a"></div><div style="left:80px;top:1643px;width:54px;height:54px;background:linear-gradient(#464646,#383838);border:1px solid #222;border-top-color:#4a4a4a"></div><div style="left:134px;top:1643px;width:54px;height:54px;background:#5e7490;border:1px solid #222;border-top-color:#4a4a4a"></div><div style="left:188px;top:1643px;width:54px;height:54px;background:linear-gradient(#464646,#383838);border:1px solid #222;border-top-color:#4a4a4a"></div><div style="left:242px;top:1643px;width:54px;height:54px;background:linear-gradient(#464646,#383838);border:1px solid #222;border-top-color:#4a4a4a"></div><svg style="left:26px;top:1643px" width="270" height="54">
<rect x="6" y="18" width="6" height="22" fill="#e8e8e8" stroke="#222"/><path d="M28 17L13 29L28 41Z M48 17L33 29L48 41Z" fill="#e8e8e8" stroke="#222" stroke-width="1.2"/>
<path d="M92 15L68 29L92 43Z" fill="#e8e8e8" stroke="#222" stroke-width="1.2"/>
<rect x="120" y="16" width="27" height="27" fill="#ddd" stroke="#222" stroke-width="2"/>
<path d="M176 15L200 29L176 43Z" fill="#e8e8e8" stroke="#222" stroke-width="1.2"/>
<path d="M246 17L261 29L246 41Z M226 17L241 29L226 41Z" fill="#e8e8e8" stroke="#222" stroke-width="1.2"/><rect x="262" y="18" width="6" height="22" fill="#e8e8e8" stroke="#222"/>
</svg><div style="left:300px;top:1642px;width:91px;height:55px;background:#141414"></div><div style="left:305.0px;top:1661.5px;font-size:23px;color:#e8e8e8;font-family:'Liberation Sans',sans-serif;">1</div><div style="left:394px;top:1644px;width:27px;height:54px;background:linear-gradient(#464646,#383838);border:1px solid #222;border-top-color:#4a4a4a"></div><div style="left:421px;top:1644px;width:27px;height:54px;background:linear-gradient(#464646,#383838);border:1px solid #222;border-top-color:#4a4a4a"></div><svg style="left:398px;top:1660px" width="48" height="24"><path d="M10 5L2 12L10 19Z" fill="#e8e8e8" stroke="#222"/><rect x="12" y="5" width="6" height="14" fill="#e8e8e8" stroke="#222"/><rect x="28" y="5" width="6" height="14" fill="#e8e8e8" stroke="#222"/><path d="M36 5L44 12L36 19Z" fill="#e8e8e8" stroke="#222"/></svg><div style="left:26px;top:1713px;width:54px;height:46px;background:linear-gradient(#464646,#383838);border:1px solid #222;border-top-color:#4a4a4a"></div><div style="left:80px;top:1713px;width:54px;height:46px;background:linear-gradient(#464646,#383838);border:1px solid #222;border-top-color:#4a4a4a"></div><div style="left:134px;top:1713px;width:54px;height:46px;background:linear-gradient(#464646,#383838);border:1px solid #222;border-top-color:#4a4a4a"></div><div style="left:188px;top:1713px;width:54px;height:46px;background:linear-gradient(#464646,#383838);border:1px solid #222;border-top-color:#4a4a4a"></div><div style="left:242px;top:1713px;width:54px;height:46px;background:linear-gradient(#464646,#383838);border:1px solid #222;border-top-color:#4a4a4a"></div><div style="left:296px;top:1713px;width:54px;height:46px;background:linear-gradient(#464646,#383838);border:1px solid #222;border-top-color:#4a4a4a"></div><div style="left:354px;top:1713px;width:46px;height:46px;background:linear-gradient(#464646,#383838);border:1px solid #222;border-top-color:#4a4a4a"></div><div style="left:400px;top:1713px;width:46px;height:46px;background:linear-gradient(#464646,#383838);border:1px solid #222;border-top-color:#4a4a4a"></div><svg style="left:26px;top:1713px" width="420" height="46">
<rect x="15" y="8" width="26" height="24" fill="#eee" stroke="#1c1c2a" stroke-width="2"/><rect x="16" y="9" width="24" height="5" fill="#aaa"/><path d="M30 22V40L35 35L40 40L43 37L38 32H44Z" fill="#111" stroke="#eee" stroke-width="1.2"/>
<path d="M64 18H70L80 10V36L70 28H64Z" fill="#666" stroke="#ddd" stroke-width="1.5"/><ellipse cx="82" cy="23" rx="6" ry="14" fill="none" stroke="#ddd" stroke-width="2"/>
<path d="M114 30H150Q150 14 132 14Q120 14 116 22L112 18V28Z" fill="none" stroke="#eee" stroke-width="3"/><path d="M150 37H160L155 43Z" fill="#8a8a8a"/>
<circle cx="187" cy="23" r="16" fill="none" stroke="#ddd" stroke-width="2.5"/><path d="M187 14V32M178 23H196" stroke="#ddd" stroke-width="2.5"/>
<path d="M224 13V36M236 13V22M246 13V36M258 13V22M270 13V36" stroke="#ddd" stroke-width="3"/><path d="M276 30L282 36L276 42Z" fill="#8a8a8a"/>
<path d="M286 24H322" stroke="#ddd" stroke-width="3"/><circle cx="304" cy="24" r="5" fill="#ddd"/><path d="M292 8L284 13L292 18M316 8L324 13L316 18" fill="none" stroke="#aaa" stroke-width="1.5"/>
<rect x="344" y="12" width="4" height="22" fill="#2a4a2a" stroke="#3a5a3a"/><path d="M364 12L350 23L364 34Z" fill="#555"/>
<path d="M402 12L416 23L402 34Z" fill="#555"/><rect x="418" y="12" width="4" height="22" fill="#2a4a2a" stroke="#3a5a3a"/>
</svg><div style="left:457px;top:1669px;width:2497px;height:2px;background:#9a9a9a"></div><svg style="left:0;top:0" width="3456" height="1765"><path d="M510.0 1660V1677M572.6 1660V1677M635.2 1660V1677M697.9 1654V1683M760.5 1660V1677M823.1 1660V1677M885.7 1660V1677M948.4 1654V1683M1011.0 1660V1677M1073.6 1660V1677M1136.2 1660V1677M1198.9 1654V1683M1261.5 1660V1677M1324.1 1660V1677M1386.7 1660V1677M1449.4 1654V1683M1512.0 1660V1677M1574.6 1660V1677M1637.2 1660V1677M1699.9 1654V1683M1762.5 1660V1677M1825.1 1660V1677M1887.7 1660V1677M1950.4 1654V1683M2013.0 1660V1677M2075.6 1660V1677M2138.2 1660V1677M2200.9 1654V1683M2263.5 1660V1677M2326.1 1660V1677M2388.7 1660V1677M2451.4 1654V1683M2514.0 1660V1677M2576.6 1660V1677M2639.2 1660V1677M2701.9 1654V1683M2764.5 1660V1677M2827.1 1660V1677M2889.7 1660V1677M2952.4 1654V1683" stroke="#a8a8a8" stroke-width="2" fill="none"/><path d="M1864.5 1649V1709" stroke="#8a8a8a" stroke-width="1.3"/></svg><div style="left:695.9px;top:1627.0px;font-size:20px;color:#9c9c9c;font-family:'Liberation Sans',sans-serif;">24</div><div style="left:946.4px;top:1627.0px;font-size:20px;color:#9c9c9c;font-family:'Liberation Sans',sans-serif;">48</div><div style="left:1196.9px;top:1627.0px;font-size:20px;color:#9c9c9c;font-family:'Liberation Sans',sans-serif;">72</div><div style="left:1447.4px;top:1627.0px;font-size:20px;color:#9c9c9c;font-family:'Liberation Sans',sans-serif;">96</div><div style="left:1697.9px;top:1627.0px;font-size:20px;color:#9c9c9c;font-family:'Liberation Sans',sans-serif;">120</div><div style="left:1948.4px;top:1627.0px;font-size:20px;color:#9c9c9c;font-family:'Liberation Sans',sans-serif;">144</div><div style="left:2198.9px;top:1627.0px;font-size:20px;color:#9c9c9c;font-family:'Liberation Sans',sans-serif;">168</div><div style="left:2449.4px;top:1627.0px;font-size:20px;color:#9c9c9c;font-family:'Liberation Sans',sans-serif;">192</div><div style="left:2699.9px;top:1627.0px;font-size:20px;color:#9c9c9c;font-family:'Liberation Sans',sans-serif;">216</div><div style="left:2951.4px;top:1627.0px;font-size:20px;color:#9c9c9c;font-family:'Liberation Sans',sans-serif;">2</div><div style="left:1847.0px;top:1632.0px;font-size:20px;color:#a0a0a0;font-family:'Liberation Sans',sans-serif;">136</div><svg style="left:455px;top:1629px" width="52" height="40"><path d="M1.5 1.5H47V27.5H16L1.5 37Z" fill="#080808" stroke="#e8e8e8" stroke-width="1.5"/></svg><div style="left:473.0px;top:1633.3px;font-size:22px;color:#f0f0f0;font-family:'Liberation Sans',sans-serif;">1</div><div style="left:457px;top:1711px;width:84px;height:43px;background:#1e1e1e"></div><div style="left:545px;top:1711px;width:83px;height:43px;background:#141414"></div><div style="left:463.0px;top:1723.5px;font-size:23px;color:#e8e8e8;font-family:'Liberation Sans',sans-serif;">1</div><div style="left:551.0px;top:1723.5px;font-size:23px;color:#e8e8e8;font-family:'Liberation Sans',sans-serif;">1</div><div style="left:640px;top:1730px;width:2137px;height:10px;background:#737373"></div><svg style="left:630px;top:1722px" width="12" height="26"><path d="M1 1L11 13L1 25Z" fill="#9a9a9a"/></svg><svg style="left:2776px;top:1722px" width="12" height="26"><path d="M11 1L1 13L11 25Z" fill="#9a9a9a"/></svg><div style="left:2791px;top:1712px;width:83px;height:42px;background:#141414"></div><div style="left:2879px;top:1712px;width:84px;height:42px;background:#1e1e1e"></div><div style="left:2795.0px;top:1724.8px;font-size:24px;color:#f0f0f0;font-family:'Liberation Mono',monospace;transform:scaleX(0.9487);transform-origin:left;">240</div><div style="left:2883.0px;top:1724.8px;font-size:24px;color:#f0f0f0;font-family:'Liberation Mono',monospace;transform:scaleX(0.9487);transform-origin:left;">240</div><svg style="left:2967px;top:1652px" width="84" height="84"><circle cx="42" cy="42" r="40" fill="#2f2f2f" stroke="#252525" stroke-width="1.5"/><circle cx="50" cy="33" r="8" fill="none" stroke="#555" stroke-width="4"/><path d="M44 39L26 57M32 51L37 56M28 55L32 59" stroke="#555" stroke-width="4"/></svg><div style="left:3043px;top:1672px;width:37px;height:42px;background:#333;border:1px solid #262626;border-left:none"></div><svg style="left:3054px;top:1688px" width="14" height="10"><path d="M1 1H13L7 9Z" fill="#999"/></svg><div style="left:3088px;top:1643px;width:47px;height:48px;background:#3a3a3a;border:1px solid #222"></div><svg style="left:3094px;top:1648px" width="40" height="40"><rect x="2" y="2" width="32" height="34" fill="#888" stroke="#222"/><rect x="5" y="12" width="4" height="5" fill="#e02020"/><rect x="5" y="17" width="4" height="5" fill="#30c030"/><rect x="5" y="22" width="4" height="5" fill="#3070e0"/><rect x="5" y="27" width="4" height="5" fill="#e02020"/><path d="M14 20A8 8 0 0 1 30 16M30 20A8 8 0 0 1 14 24" fill="none" stroke="#f4f4f4" stroke-width="3"/></svg><div style="left:3141px;top:1643px;width:307px;height:48px;background:linear-gradient(#4a4a4a,#3c3c3c);border:1px solid #222"></div><div style="left:3176.0px;top:1655.5px;font-size:23px;color:#dadada;font-family:'Liberation Sans',sans-serif;transform:scaleX(0.9347);transform-origin:left;">0 keys, 0/0 channels</div><svg style="left:3418px;top:1659px" width="16" height="14"><path d="M8 1L15 13H1Z" fill="#8a8a8a"/></svg><div style="left:3088px;top:1696px;width:47px;height:47px;background:#3a3a3a;border:1px solid #222"></div><svg style="left:3095px;top:1702px" width="34" height="34"><rect width="34" height="34" fill="#000"/><path d="M1 19Q8 4 17 17T33 17" fill="none" stroke="#5a90d0" stroke-width="2"/><path d="M1 19Q8 26 17 19T33 17" fill="none" stroke="#e0a030" stroke-width="2"/><path d="M1 19H33" stroke="#eee" stroke-width="1.5"/></svg><div style="left:3141px;top:1697px;width:307px;height:46px;background:linear-gradient(#4a4a4a,#3c3c3c);border:1px solid #222"></div><div style="left:3426px;top:1697px;width:22px;height:46px;background:#333"></div><div style="left:3169.0px;top:1709.5px;font-size:23px;color:#dadada;font-family:'Liberation Sans',sans-serif;transform:scaleX(0.9259);transform-origin:left;">Key All Channels</div><svg style="left:3430px;top:1707px" width="14" height="28"><path d="M7 1L13 11H1Z M7 27L13 17H1Z" fill="#8a8a8a"/></svg><div style="left:0px;top:1765px;width:3456px;height:51px;background:linear-gradient(#1a1a1a,#161616);border-top:1px solid #0c0c0c;border-radius:0 0 15px 15px"></div><div style="left:3106px;top:1766px;width:350px;height:50px;background:#333;border-radius:0 0 15px 0"></div><div style="left:4.0px;top:1780.2px;font-size:21px;color:#d4d4d4;font-family:'Liberation Sans',sans-serif;transform:scaleX(1.0448);transform-origin:left;">Left mouse selects keys and moves selection. Middle mouse shifts keys. Right mouse clears selection. Spacebar for viewing and unrestricted scrubbing.</div><svg style="left:3109px;top:1770px" width="44" height="44"><ellipse cx="20" cy="19" rx="18" ry="14" fill="#d8d8d8" stroke="#888"/><path d="M8 14Q14 10 18 16M22 10Q28 14 30 22M10 24Q16 20 22 26" stroke="#999" fill="none"/><path d="M36 34L42 39L36 44Z" fill="#8a8a8a"/></svg><svg style="left:3165px;top:1771px" width="42" height="42"><path d="M8 22A13 13 0 0 1 32 12M34 20A13 13 0 0 1 10 30" fill="none" stroke="#555" stroke-width="6"/><path d="M28 4L36 14L26 16Z M14 38L6 28L16 26Z" fill="#555"/></svg><div style="left:3211px;top:1766px;width:199px;height:49px;background:linear-gradient(#464646,#383838);border-left:1px solid #222"></div><div style="left:3386px;top:1766px;width:24px;height:49px;background:#2c2c2c"></div><div style="left:3236.0px;top:1777.5px;font-size:23px;color:#dadada;font-family:'Liberation Sans',sans-serif;transform:scaleX(0.9619);transform-origin:left;">Auto Update</div><svg style="left:3391px;top:1778px" width="14" height="26"><path d="M7 1L13 11H1Z M7 25L13 15H1Z" fill="#8a8a8a"/></svg><div style="left:600px;top:1817px;width:2252px;height:3px;background:#8a8888;border-radius:10px 10px 0 0"></div>
</body></html>
